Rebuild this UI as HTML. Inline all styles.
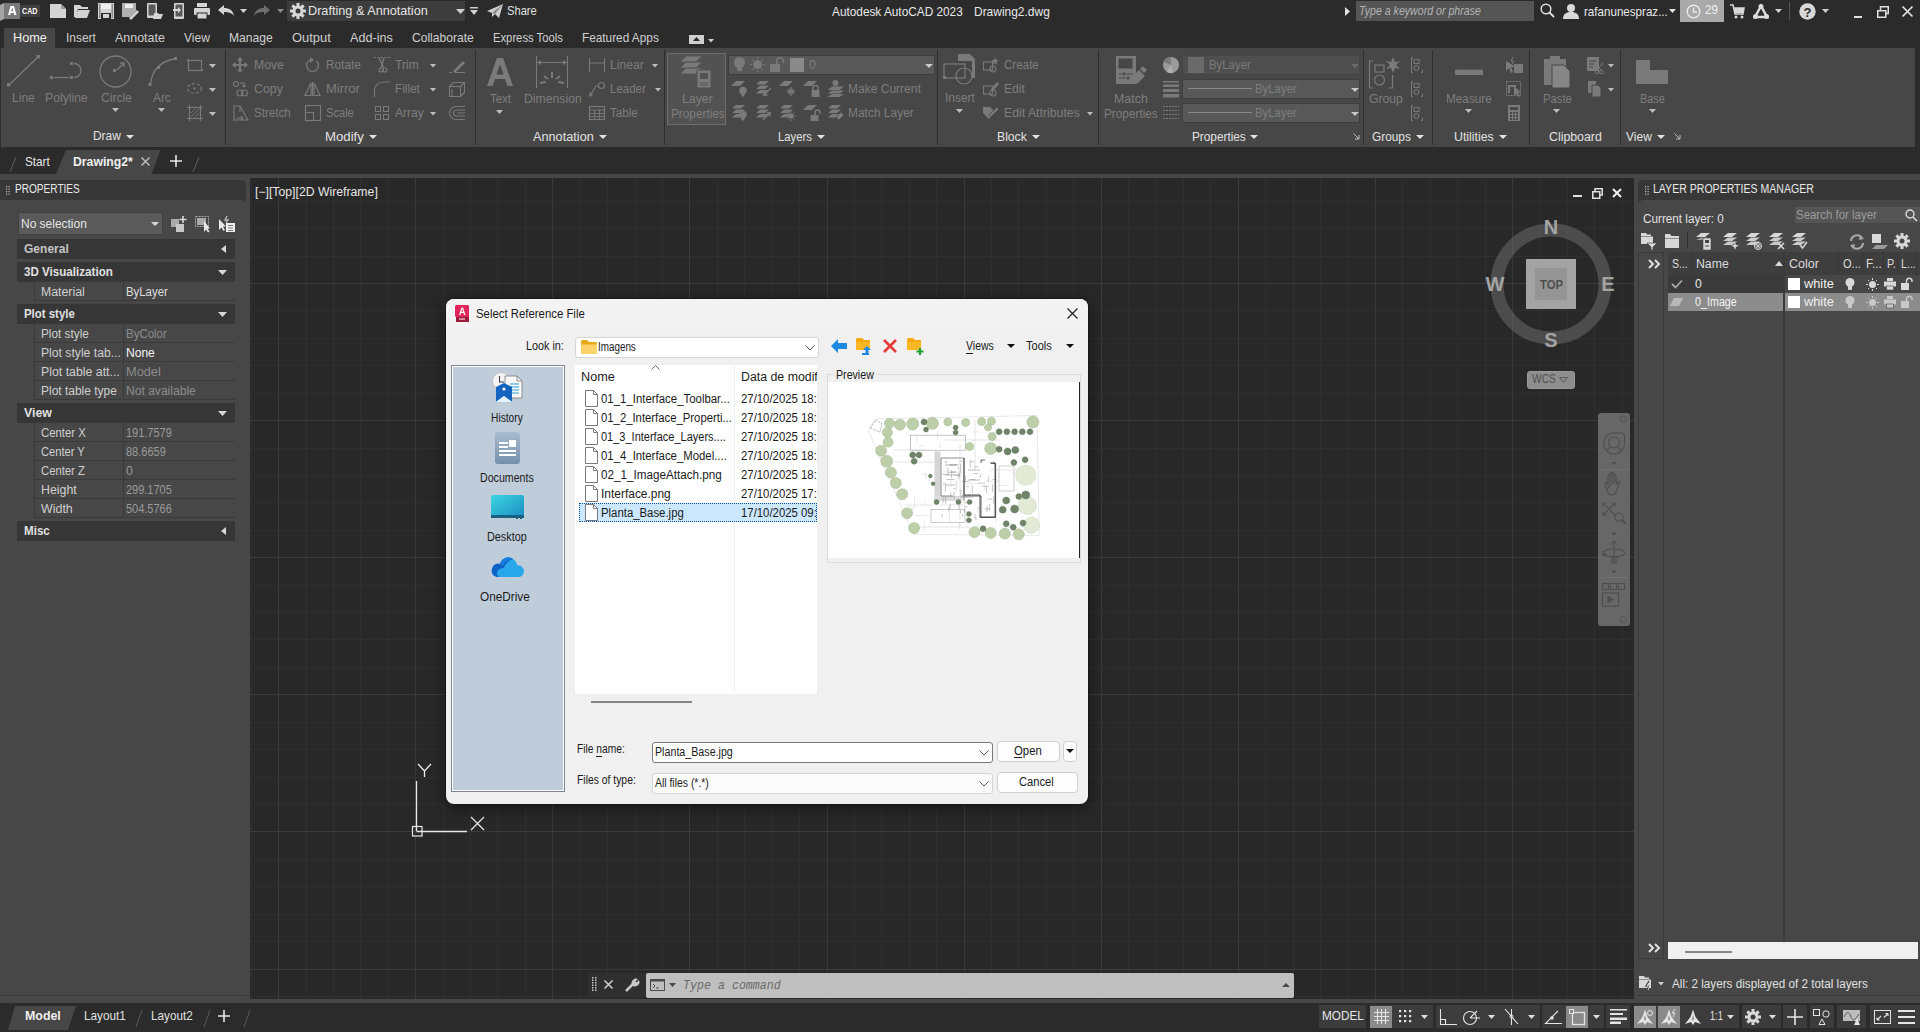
<!DOCTYPE html><html><head><meta charset="utf-8"><style>
html,body{margin:0;padding:0}
body{width:1920px;height:1032px;overflow:hidden;position:relative;background:#2b2b2b;font-family:'Liberation Sans',sans-serif}
</style></head><body><div style="position:absolute;left:0px;top:0px;width:1920px;height:48px;background:#2b2b2b;"></div><div style="position:absolute;left:1px;top:48px;width:1914px;height:99px;background:#474747;"></div><div style="position:absolute;left:0px;top:147px;width:1920px;height:27px;background:#2b2b2b;"></div><div style="position:absolute;left:0px;top:174px;width:1920px;height:4px;background:#474747;"></div><div style="position:absolute;left:0px;top:178px;width:250px;height:821px;background:#474747;"></div><div style="position:absolute;left:1634px;top:178px;width:286px;height:821px;background:#474747;"></div><div style="position:absolute;left:0px;top:999px;width:1920px;height:4px;background:#474747;"></div><div style="position:absolute;left:0px;top:1003px;width:1920px;height:29px;background:#2b2b2b;"></div><svg style="position:absolute;left:250px;top:178px;overflow:visible;" width="1384" height="821" viewBox="0 0 1384 821"><rect width="100%" height="100%" fill="#282828"/><rect x="1" y="0" width="1" height="821" fill="#2f2f2f"/><rect x="28" y="0" width="1" height="821" fill="#3b3b3b"/><rect x="56" y="0" width="1" height="821" fill="#2f2f2f"/><rect x="83" y="0" width="1" height="821" fill="#2f2f2f"/><rect x="110" y="0" width="1" height="821" fill="#2f2f2f"/><rect x="138" y="0" width="1" height="821" fill="#2f2f2f"/><rect x="165" y="0" width="1" height="821" fill="#3b3b3b"/><rect x="193" y="0" width="1" height="821" fill="#2f2f2f"/><rect x="220" y="0" width="1" height="821" fill="#2f2f2f"/><rect x="247" y="0" width="1" height="821" fill="#2f2f2f"/><rect x="275" y="0" width="1" height="821" fill="#2f2f2f"/><rect x="302" y="0" width="1" height="821" fill="#3b3b3b"/><rect x="330" y="0" width="1" height="821" fill="#2f2f2f"/><rect x="357" y="0" width="1" height="821" fill="#2f2f2f"/><rect x="385" y="0" width="1" height="821" fill="#2f2f2f"/><rect x="412" y="0" width="1" height="821" fill="#2f2f2f"/><rect x="439" y="0" width="1" height="821" fill="#3b3b3b"/><rect x="467" y="0" width="1" height="821" fill="#2f2f2f"/><rect x="494" y="0" width="1" height="821" fill="#2f2f2f"/><rect x="522" y="0" width="1" height="821" fill="#2f2f2f"/><rect x="549" y="0" width="1" height="821" fill="#2f2f2f"/><rect x="577" y="0" width="1" height="821" fill="#3b3b3b"/><rect x="604" y="0" width="1" height="821" fill="#2f2f2f"/><rect x="631" y="0" width="1" height="821" fill="#2f2f2f"/><rect x="659" y="0" width="1" height="821" fill="#2f2f2f"/><rect x="686" y="0" width="1" height="821" fill="#2f2f2f"/><rect x="714" y="0" width="1" height="821" fill="#3b3b3b"/><rect x="741" y="0" width="1" height="821" fill="#2f2f2f"/><rect x="768" y="0" width="1" height="821" fill="#2f2f2f"/><rect x="796" y="0" width="1" height="821" fill="#2f2f2f"/><rect x="823" y="0" width="1" height="821" fill="#2f2f2f"/><rect x="851" y="0" width="1" height="821" fill="#3b3b3b"/><rect x="878" y="0" width="1" height="821" fill="#2f2f2f"/><rect x="906" y="0" width="1" height="821" fill="#2f2f2f"/><rect x="933" y="0" width="1" height="821" fill="#2f2f2f"/><rect x="960" y="0" width="1" height="821" fill="#2f2f2f"/><rect x="988" y="0" width="1" height="821" fill="#3b3b3b"/><rect x="1015" y="0" width="1" height="821" fill="#2f2f2f"/><rect x="1043" y="0" width="1" height="821" fill="#2f2f2f"/><rect x="1070" y="0" width="1" height="821" fill="#2f2f2f"/><rect x="1097" y="0" width="1" height="821" fill="#2f2f2f"/><rect x="1125" y="0" width="1" height="821" fill="#3b3b3b"/><rect x="1152" y="0" width="1" height="821" fill="#2f2f2f"/><rect x="1180" y="0" width="1" height="821" fill="#2f2f2f"/><rect x="1207" y="0" width="1" height="821" fill="#2f2f2f"/><rect x="1235" y="0" width="1" height="821" fill="#2f2f2f"/><rect x="1262" y="0" width="1" height="821" fill="#3b3b3b"/><rect x="1289" y="0" width="1" height="821" fill="#2f2f2f"/><rect x="1317" y="0" width="1" height="821" fill="#2f2f2f"/><rect x="1344" y="0" width="1" height="821" fill="#2f2f2f"/><rect x="1372" y="0" width="1" height="821" fill="#2f2f2f"/><rect x="0" y="23" width="1384" height="1" fill="#2f2f2f"/><rect x="0" y="50" width="1384" height="1" fill="#2f2f2f"/><rect x="0" y="78" width="1384" height="1" fill="#2f2f2f"/><rect x="0" y="105" width="1384" height="1" fill="#3b3b3b"/><rect x="0" y="132" width="1384" height="1" fill="#2f2f2f"/><rect x="0" y="160" width="1384" height="1" fill="#2f2f2f"/><rect x="0" y="187" width="1384" height="1" fill="#2f2f2f"/><rect x="0" y="215" width="1384" height="1" fill="#2f2f2f"/><rect x="0" y="242" width="1384" height="1" fill="#3b3b3b"/><rect x="0" y="270" width="1384" height="1" fill="#2f2f2f"/><rect x="0" y="297" width="1384" height="1" fill="#2f2f2f"/><rect x="0" y="324" width="1384" height="1" fill="#2f2f2f"/><rect x="0" y="352" width="1384" height="1" fill="#2f2f2f"/><rect x="0" y="379" width="1384" height="1" fill="#3b3b3b"/><rect x="0" y="407" width="1384" height="1" fill="#2f2f2f"/><rect x="0" y="434" width="1384" height="1" fill="#2f2f2f"/><rect x="0" y="461" width="1384" height="1" fill="#2f2f2f"/><rect x="0" y="489" width="1384" height="1" fill="#2f2f2f"/><rect x="0" y="516" width="1384" height="1" fill="#3b3b3b"/><rect x="0" y="544" width="1384" height="1" fill="#2f2f2f"/><rect x="0" y="571" width="1384" height="1" fill="#2f2f2f"/><rect x="0" y="599" width="1384" height="1" fill="#2f2f2f"/><rect x="0" y="626" width="1384" height="1" fill="#2f2f2f"/><rect x="0" y="653" width="1384" height="1" fill="#3b3b3b"/><rect x="0" y="681" width="1384" height="1" fill="#2f2f2f"/><rect x="0" y="708" width="1384" height="1" fill="#2f2f2f"/><rect x="0" y="736" width="1384" height="1" fill="#2f2f2f"/><rect x="0" y="763" width="1384" height="1" fill="#2f2f2f"/><rect x="0" y="791" width="1384" height="1" fill="#3b3b3b"/><rect x="0" y="818" width="1384" height="1" fill="#2f2f2f"/></svg><svg style="position:absolute;left:0px;top:3px;overflow:visible;" width="20" height="19" viewBox="0 0 20 19"><path d="M0 2 L4 0 V16 L0 18 Z" fill="#a5a5a5"/><rect x="4" y="0" width="16" height="16" fill="#7a7a7a"/><path d="M8 12 L10.5 3 H14 L16.5 12 H14.3 L13.8 10 H10.7 L10.2 12 Z M11.2 8.2 H13.3 L12.25 4.6 Z" fill="#ffffff"/></svg><div style="position:absolute;left:20px;top:5px;width:20px;height:12px;background:#3f3f3f;"></div><svg style="position:absolute;left:20px;top:5px;overflow:visible;" width="20" height="12" viewBox="0 0 20 12"><text x="2" y="9.2" textLength="15.5" lengthAdjust="spacingAndGlyphs" font-family="Liberation Sans" font-weight="bold" font-size="8.8" fill="#ffffff">CAD</text></svg><svg style="position:absolute;left:50px;top:4px;overflow:visible;" width="16" height="14" viewBox="0 0 16 14"><path d="M0 0 H11 L16 5 V14 H0 Z" fill="#d4d4d4"/><path d="M11 0 V5 H16" fill="#9a9a9a"/></svg><svg style="position:absolute;left:74px;top:5px;overflow:visible;" width="16" height="13" viewBox="0 0 16 13"><path d="M0 0 H6 L8 2 H14 V4 H4 L2 12 H0 Z" fill="#d4d4d4"/><path d="M4 5 H16 L13 13 H1 Z" fill="#d4d4d4"/></svg><svg style="position:absolute;left:98px;top:3px;overflow:visible;" width="16" height="16" viewBox="0 0 16 16"><path d="M0 0 H16 V16 H0 Z" fill="#d4d4d4"/><rect x="3" y="1" width="10" height="5" fill="#eeeeee"/><rect x="3" y="10" width="10" height="6" fill="#2b2b2b"/><rect x="5" y="11" width="6" height="4" fill="#d4d4d4"/><rect x="1" y="1" width="1.5" height="14" fill="#8a8a8a"/><rect x="13.5" y="1" width="1.5" height="14" fill="#8a8a8a"/></svg><svg style="position:absolute;left:122px;top:3px;overflow:visible;" width="16" height="16" viewBox="0 0 16 16"><path d="M0 0 H14 V8 L8 14 H0 Z" fill="#b0b0b0"/><rect x="3" y="1" width="8" height="4" fill="#eeeeee"/><path d="M7 15 L15 7 L17 9 L9 17 Z" fill="#d4d4d4"/></svg><svg style="position:absolute;left:147px;top:3px;overflow:visible;" width="16" height="16" viewBox="0 0 16 16"><rect x="0" y="0" width="10" height="15" rx="1" fill="#d4d4d4"/><rect x="1.5" y="1.5" width="7" height="11" fill="#5a5a5a"/><path d="M7 10 H11 L12 11 H16 L14 16 H6 Z" fill="#d4d4d4"/></svg><svg style="position:absolute;left:173px;top:3px;overflow:visible;" width="12" height="16" viewBox="0 0 12 16"><rect x="1" y="0" width="10" height="16" rx="1" fill="#d4d4d4"/><rect x="2.5" y="1.5" width="7" height="12" fill="#5a5a5a"/><path d="M0 6 H5 V4 L8 7 L5 10 V8 H0 Z" fill="#d4d4d4"/></svg><svg style="position:absolute;left:194px;top:3px;overflow:visible;" width="16" height="16" viewBox="0 0 16 16"><rect x="3" y="0" width="10" height="4" fill="#d4d4d4"/><rect x="0" y="5" width="16" height="7" rx="1" fill="#d4d4d4"/><rect x="3" y="10" width="10" height="6" fill="#d4d4d4" stroke="#2b2b2b" stroke-width="1"/></svg><svg style="position:absolute;left:218px;top:5px;overflow:visible;" width="16" height="11" viewBox="0 0 16 11"><path d="M0 5 L6 0 V3 C11 3 15 5 16 11 C14 8 11 7 6 7 V10 Z" fill="#d4d4d4"/></svg><svg style="position:absolute;left:240px;top:9px;overflow:visible;" width="7" height="4" viewBox="0 0 7 4"><path d="M0 0 H7 L3.5 4 Z" fill="#cfcfcf"/></svg><svg style="position:absolute;left:254px;top:5px;overflow:visible;" width="16" height="11" viewBox="0 0 16 11"><path d="M16 5 L10 0 V3 C5 3 1 5 0 11 C2 8 5 7 10 7 V10 Z" fill="#6e6e6e"/></svg><svg style="position:absolute;left:277px;top:9px;overflow:visible;" width="7" height="4" viewBox="0 0 7 4"><path d="M0 0 H7 L3.5 4 Z" fill="#8a8a8a"/></svg><div style="position:absolute;left:287px;top:1px;width:178px;height:20px;background:#3d3d3d;"></div><svg style="position:absolute;left:290px;top:3px;overflow:visible;" width="16" height="16" viewBox="0 0 16 16"><g fill="#d8d8d8"><circle cx="8" cy="8" r="5.5"/><rect x="6.5" y="0" width="3" height="16" transform="rotate(0 8 8)"/><rect x="6.5" y="0" width="3" height="16" transform="rotate(45 8 8)"/><rect x="6.5" y="0" width="3" height="16" transform="rotate(90 8 8)"/><rect x="6.5" y="0" width="3" height="16" transform="rotate(135 8 8)"/></g><circle cx="8" cy="8" r="2.5" fill="#3d3d3d"/></svg><span style="position:absolute;left:308px;top:3.0px;line-height:16px;font-size:13px;font-family:'Liberation Sans',sans-serif;color:#e4e4e4;white-space:nowrap;transform-origin:0 0;transform:scaleX(0.975);">Drafting &amp; Annotation</span><svg style="position:absolute;left:456px;top:9px;overflow:visible;" width="9" height="5" viewBox="0 0 9 5"><path d="M0 0 H9 L4.5 5 Z" fill="#d0d0d0"/></svg><svg style="position:absolute;left:470px;top:7px;overflow:visible;" width="8" height="9" viewBox="0 0 8 9"><rect x="0" y="0" width="8" height="1.5" fill="#d0d0d0"/><path d="M0 3 H8 L4 8 Z" fill="#d0d0d0"/></svg><svg style="position:absolute;left:487px;top:4px;overflow:visible;" width="16" height="14" viewBox="0 0 16 14"><path d="M0 7 L16 0 L12 14 L8 10 L5 13 V9 Z" fill="#cfcfcf"/><path d="M5 9 L16 0 L8 10" fill="#8a8a8a"/></svg><span style="position:absolute;left:507px;top:3.0px;line-height:16px;font-size:13px;font-family:'Liberation Sans',sans-serif;color:#e0e0e0;white-space:nowrap;transform-origin:0 0;transform:scaleX(0.859);">Share</span><span style="position:absolute;left:832px;top:4.0px;line-height:16px;font-size:13px;font-family:'Liberation Sans',sans-serif;color:#e8e8e8;white-space:nowrap;transform-origin:0 0;transform:scaleX(0.909);">Autodesk AutoCAD 2023</span><span style="position:absolute;left:974px;top:4.0px;line-height:16px;font-size:13px;font-family:'Liberation Sans',sans-serif;color:#e8e8e8;white-space:nowrap;transform-origin:0 0;transform:scaleX(0.920);">Drawing2.dwg</span><svg style="position:absolute;left:1345px;top:7px;overflow:visible;" width="5" height="9" viewBox="0 0 5 9"><path d="M0 0 L5 4.5 L0 9 Z" fill="#e0e0e0"/></svg><div style="position:absolute;left:1356px;top:1px;width:178px;height:20px;background:#555555;"></div><span style="position:absolute;left:1359px;top:3.5px;line-height:15px;font-size:12px;font-family:'Liberation Sans',sans-serif;color:#b4b4b4;font-style:italic;white-space:nowrap;transform-origin:0 0;transform:scaleX(0.884);">Type a keyword or phrase</span><svg style="position:absolute;left:1540px;top:3px;overflow:visible;" width="15" height="15" viewBox="0 0 15 15"><circle cx="6" cy="6" r="4.8" fill="none" stroke="#e0e0e0" stroke-width="1.5"/><path d="M9.5 9.5 L14 14" stroke="#e0e0e0" stroke-width="1.8"/></svg><svg style="position:absolute;left:1563px;top:3px;overflow:visible;" width="16" height="16" viewBox="0 0 16 16"><circle cx="8" cy="5" r="4" fill="#d8d8d8"/><path d="M0 16 C0 11 3 9 8 9 C13 9 16 11 16 16 Z" fill="#d8d8d8"/></svg><span style="position:absolute;left:1584px;top:4.0px;line-height:16px;font-size:13px;font-family:'Liberation Sans',sans-serif;color:#e8e8e8;white-space:nowrap;transform-origin:0 0;transform:scaleX(0.892);">rafanunespraz...</span><svg style="position:absolute;left:1669px;top:9px;overflow:visible;" width="7" height="4" viewBox="0 0 7 4"><path d="M0 0 H7 L3.5 4 Z" fill="#e0e0e0"/></svg><div style="position:absolute;left:1680px;top:0px;width:44px;height:22px;background:#a9a9a9;"></div><svg style="position:absolute;left:1686px;top:4px;overflow:visible;" width="15" height="15" viewBox="0 0 15 15"><circle cx="7.5" cy="7.5" r="6.3" fill="none" stroke="#e8e8e8" stroke-width="1.5"/><path d="M7.5 3.5 V8 H11" fill="none" stroke="#e8e8e8" stroke-width="1.5"/></svg><span style="position:absolute;left:1705px;top:2.5px;line-height:15px;font-size:12px;font-family:'Liberation Sans',sans-serif;color:#f0f0f0;white-space:nowrap;transform-origin:0 0;transform:scaleX(0.958);">29</span><svg style="position:absolute;left:1730px;top:4px;overflow:visible;" width="14" height="15" viewBox="0 0 14 15"><path d="M0 1 H3 L5 10 H13 L14 4 H4" fill="none" stroke="#d8d8d8" stroke-width="1.5"/><rect x="4" y="4" width="9" height="5" fill="#d8d8d8"/><circle cx="6" cy="13" r="1.5" fill="#d8d8d8"/><circle cx="12" cy="13" r="1.5" fill="#d8d8d8"/></svg><svg style="position:absolute;left:1753px;top:4px;overflow:visible;" width="16" height="15" viewBox="0 0 16 15"><path d="M8 2 L2 13 H14 Z" fill="none" stroke="#dcdcdc" stroke-width="2.5"/><circle cx="8" cy="2.5" r="2.5" fill="#dcdcdc"/><circle cx="2.5" cy="12.5" r="2.5" fill="#dcdcdc"/><circle cx="13.5" cy="12.5" r="2.5" fill="#dcdcdc"/></svg><svg style="position:absolute;left:1775px;top:9px;overflow:visible;" width="7" height="4" viewBox="0 0 7 4"><path d="M0 0 H7 L3.5 4 Z" fill="#d0d0d0"/></svg><div style="position:absolute;left:1789px;top:2px;width:1px;height:18px;background:#555;"></div><svg style="position:absolute;left:1799px;top:3px;overflow:visible;" width="17" height="17" viewBox="0 0 17 17"><circle cx="8.5" cy="8.5" r="8.2" fill="#d8d8d8"/><text x="8.5" y="13.5" text-anchor="middle" font-family="Liberation Sans" font-weight="bold" font-size="13" fill="#2b2b2b">?</text></svg><svg style="position:absolute;left:1822px;top:9px;overflow:visible;" width="7" height="4" viewBox="0 0 7 4"><path d="M0 0 H7 L3.5 4 Z" fill="#d0d0d0"/></svg><div style="position:absolute;left:1854px;top:16px;width:8px;height:2px;background:#e0e0e0;"></div><svg style="position:absolute;left:1877px;top:6px;overflow:visible;" width="12" height="12" viewBox="0 0 12 12"><rect x="0.75" y="4.75" width="8" height="6.5" fill="none" stroke="#e0e0e0" stroke-width="1.5"/><path d="M3.5 4.5 V0.75 H11.25 V7.5 H9" fill="none" stroke="#e0e0e0" stroke-width="1.5"/></svg><svg style="position:absolute;left:1902px;top:6px;overflow:visible;" width="11" height="11" viewBox="0 0 11 11"><path d="M0.5 0.5 L10.5 10.5 M10.5 0.5 L0.5 10.5" stroke="#e8e8e8" stroke-width="1.6"/></svg><div style="position:absolute;left:4px;top:28px;width:51px;height:20px;background:#474747;"></div><span style="position:absolute;left:13px;top:30.0px;line-height:16px;font-size:13px;font-family:'Liberation Sans',sans-serif;color:#f2f2f2;white-space:nowrap;transform-origin:0 0;transform:scaleX(0.974);">Home</span><span style="position:absolute;left:66px;top:30.0px;line-height:16px;font-size:13px;font-family:'Liberation Sans',sans-serif;color:#cfcfcf;white-space:nowrap;transform-origin:0 0;transform:scaleX(0.916);">Insert</span><span style="position:absolute;left:115px;top:30.0px;line-height:16px;font-size:13px;font-family:'Liberation Sans',sans-serif;color:#cfcfcf;white-space:nowrap;transform-origin:0 0;transform:scaleX(0.957);">Annotate</span><span style="position:absolute;left:184px;top:30.0px;line-height:16px;font-size:13px;font-family:'Liberation Sans',sans-serif;color:#cfcfcf;white-space:nowrap;transform-origin:0 0;transform:scaleX(0.923);">View</span><span style="position:absolute;left:229px;top:30.0px;line-height:16px;font-size:13px;font-family:'Liberation Sans',sans-serif;color:#cfcfcf;white-space:nowrap;transform-origin:0 0;transform:scaleX(0.932);">Manage</span><span style="position:absolute;left:292px;top:30.0px;line-height:16px;font-size:13px;font-family:'Liberation Sans',sans-serif;color:#cfcfcf;white-space:nowrap;transform-origin:0 0;transform:scaleX(0.994);">Output</span><span style="position:absolute;left:350px;top:30.0px;line-height:16px;font-size:13px;font-family:'Liberation Sans',sans-serif;color:#cfcfcf;white-space:nowrap;transform-origin:0 0;transform:scaleX(0.971);">Add-ins</span><span style="position:absolute;left:412px;top:30.0px;line-height:16px;font-size:13px;font-family:'Liberation Sans',sans-serif;color:#cfcfcf;white-space:nowrap;transform-origin:0 0;transform:scaleX(0.929);">Collaborate</span><span style="position:absolute;left:493px;top:30.0px;line-height:16px;font-size:13px;font-family:'Liberation Sans',sans-serif;color:#cfcfcf;white-space:nowrap;transform-origin:0 0;transform:scaleX(0.865);">Express Tools</span><span style="position:absolute;left:582px;top:30.0px;line-height:16px;font-size:13px;font-family:'Liberation Sans',sans-serif;color:#cfcfcf;white-space:nowrap;transform-origin:0 0;transform:scaleX(0.908);">Featured Apps</span><div style="position:absolute;left:689px;top:35px;width:15px;height:9px;background:#d0d0d0;"></div><svg style="position:absolute;left:693px;top:37px;overflow:visible;" width="7" height="4" viewBox="0 0 7 4"><path d="M0 4 L3.5 0 L7 4 Z" fill="#2b2b2b"/></svg><svg style="position:absolute;left:708px;top:39px;overflow:visible;" width="6" height="3.5" viewBox="0 0 6 3.5"><path d="M0 0 H6 L3 3.5 Z" fill="#d0d0d0"/></svg><div style="position:absolute;left:225px;top:50px;width:1px;height:95px;background:#2e2e2e;"></div><div style="position:absolute;left:475px;top:50px;width:1px;height:95px;background:#2e2e2e;"></div><div style="position:absolute;left:664px;top:50px;width:1px;height:95px;background:#2e2e2e;"></div><div style="position:absolute;left:937px;top:50px;width:1px;height:95px;background:#2e2e2e;"></div><div style="position:absolute;left:1098px;top:50px;width:1px;height:95px;background:#2e2e2e;"></div><div style="position:absolute;left:1363px;top:50px;width:1px;height:95px;background:#2e2e2e;"></div><div style="position:absolute;left:1432px;top:50px;width:1px;height:95px;background:#2e2e2e;"></div><div style="position:absolute;left:1529px;top:50px;width:1px;height:95px;background:#2e2e2e;"></div><div style="position:absolute;left:1620px;top:50px;width:1px;height:95px;background:#2e2e2e;"></div><svg style="position:absolute;left:7px;top:55px;overflow:visible;" width="33" height="33" viewBox="0 0 33 33"><line x1="2" y1="30" x2="31" y2="2" stroke="#7a7a7a" stroke-width="1.3"/><rect x="0" y="28" width="3.5" height="3.5" fill="#7a7a7a"/><rect x="29.5" y="0" width="3.5" height="3.5" fill="#7a7a7a"/></svg><span style="position:absolute;left:12px;top:90.5px;line-height:15px;font-size:12px;font-family:'Liberation Sans',sans-serif;color:#7e7e7e;white-space:nowrap;transform-origin:0 0;transform:scaleX(1.005);">Line</span><svg style="position:absolute;left:50px;top:62px;overflow:visible;" width="33" height="20" viewBox="0 0 33 20"><rect x="0" y="14" width="3" height="3" fill="#7a7a7a"/><rect x="20" y="14" width="3" height="3" fill="#7a7a7a"/><rect x="20" y="0" width="3" height="3" fill="#7a7a7a"/><line x1="4" y1="15.5" x2="19" y2="15.5" stroke="#7a7a7a" stroke-width="1.3"/><path d="M24 1.5 A7 7 0 0 1 24 15.5" fill="none" stroke="#7a7a7a" stroke-width="1.3"/></svg><span style="position:absolute;left:45px;top:90.5px;line-height:15px;font-size:12px;font-family:'Liberation Sans',sans-serif;color:#7e7e7e;white-space:nowrap;transform-origin:0 0;transform:scaleX(1.018);">Polyline</span><svg style="position:absolute;left:99px;top:55px;overflow:visible;" width="33" height="33" viewBox="0 0 33 33"><circle cx="16.5" cy="16.5" r="15.5" fill="none" stroke="#7a7a7a" stroke-width="1.3"/><rect x="14" y="14" width="3" height="3" fill="#7a7a7a"/><path d="M18 15 L25 8 M21 8 H25 V12" fill="none" stroke="#7a7a7a" stroke-width="1.3"/></svg><span style="position:absolute;left:101px;top:90.5px;line-height:15px;font-size:12px;font-family:'Liberation Sans',sans-serif;color:#7e7e7e;white-space:nowrap;transform-origin:0 0;transform:scaleX(1.004);">Circle</span><svg style="position:absolute;left:112px;top:108px;overflow:visible;" width="7" height="4" viewBox="0 0 7 4"><path d="M0 0 H7 L3.5 4 Z" fill="#bdbdbd"/></svg><svg style="position:absolute;left:148px;top:57px;overflow:visible;" width="31" height="31" viewBox="0 0 31 31"><path d="M2.5 27 C4 14 12 4 28 1.5" fill="none" stroke="#7a7a7a" stroke-width="1.3"/><rect x="0.5" y="26" width="3" height="3" fill="#7a7a7a"/><rect x="9" y="9" width="3" height="3" fill="#7a7a7a"/><rect x="26" y="0" width="3" height="3" fill="#7a7a7a"/></svg><span style="position:absolute;left:153px;top:90.5px;line-height:15px;font-size:12px;font-family:'Liberation Sans',sans-serif;color:#7e7e7e;white-space:nowrap;transform-origin:0 0;transform:scaleX(0.989);">Arc</span><svg style="position:absolute;left:158px;top:108px;overflow:visible;" width="7" height="4" viewBox="0 0 7 4"><path d="M0 0 H7 L3.5 4 Z" fill="#bdbdbd"/></svg><svg style="position:absolute;left:187px;top:59px;overflow:visible;" width="16" height="13" viewBox="0 0 16 13"><rect x="1.5" y="1.5" width="13" height="10" fill="none" stroke="#7a7a7a" stroke-width="1.2"/><rect x="0" y="0" width="2" height="2" fill="#7a7a7a"/><rect x="14" y="10" width="2" height="2" fill="#7a7a7a"/></svg><svg style="position:absolute;left:187px;top:83px;overflow:visible;" width="15" height="11" viewBox="0 0 15 11"><ellipse cx="7.5" cy="5.5" rx="7" ry="4.8" fill="none" stroke="#7a7a7a" stroke-width="1.2" stroke-dasharray="3 2"/><rect x="6.5" y="4.5" width="2" height="2" fill="#7a7a7a"/></svg><svg style="position:absolute;left:187px;top:105px;overflow:visible;" width="16" height="16" viewBox="0 0 16 16"><rect x="2.5" y="2.5" width="11" height="11" fill="none" stroke="#7a7a7a" stroke-width="1.2"/><path d="M0 2.5 H16 M0 13.5 H16 M2.5 0 V16 M13.5 0 V16" stroke="#7a7a7a" stroke-width="1"/><path d="M4 12 L12 4 M4 8 L8 4 M8 12 L12 8" stroke="#7a7a7a" stroke-width="0.8"/></svg><svg style="position:absolute;left:209px;top:64px;overflow:visible;" width="7" height="4" viewBox="0 0 7 4"><path d="M0 0 H7 L3.5 4 Z" fill="#bdbdbd"/></svg><svg style="position:absolute;left:209px;top:88px;overflow:visible;" width="7" height="4" viewBox="0 0 7 4"><path d="M0 0 H7 L3.5 4 Z" fill="#bdbdbd"/></svg><svg style="position:absolute;left:209px;top:112px;overflow:visible;" width="7" height="4" viewBox="0 0 7 4"><path d="M0 0 H7 L3.5 4 Z" fill="#bdbdbd"/></svg><span style="position:absolute;left:93px;top:128.5px;line-height:15px;font-size:12px;font-family:'Liberation Sans',sans-serif;color:#e2e2e2;white-space:nowrap;transform-origin:0 0;transform:scaleX(0.992);">Draw</span><svg style="position:absolute;left:126px;top:135px;overflow:visible;" width="8" height="4" viewBox="0 0 8 4"><path d="M0 0 H8 L4.0 4 Z" fill="#e2e2e2"/></svg><svg style="position:absolute;left:232px;top:57px;overflow:visible;" width="16" height="16" viewBox="0 0 16 16"><path d="M8 0 L11 3.5 H9 V7 H12.5 V5 L16 8 L12.5 11 V9 H9 V12.5 H11 L8 16 L5 12.5 H7 V9 H3.5 V11 L0 8 L3.5 5 V7 H7 V3.5 H5 Z" fill="#7a7a7a"/></svg><span style="position:absolute;left:254px;top:57.5px;line-height:15px;font-size:12px;font-family:'Liberation Sans',sans-serif;color:#7e7e7e;white-space:nowrap;transform-origin:0 0;transform:scaleX(1.016);">Move</span><svg style="position:absolute;left:233px;top:81px;overflow:visible;" width="16" height="16" viewBox="0 0 16 16"><circle cx="3" cy="3" r="2.5" fill="none" stroke="#7a7a7a" stroke-width="1.1"/><path d="M7 2 H11 V6 M9.5 4.5 L11 6 L12.5 4.5" fill="none" stroke="#7a7a7a" stroke-width="1.1"/><circle cx="7" cy="12" r="3" fill="none" stroke="#7a7a7a" stroke-width="1.1"/><circle cx="11.5" cy="12" r="3" fill="none" stroke="#7a7a7a" stroke-width="1.1"/></svg><span style="position:absolute;left:254px;top:81.5px;line-height:15px;font-size:12px;font-family:'Liberation Sans',sans-serif;color:#7e7e7e;white-space:nowrap;transform-origin:0 0;transform:scaleX(1.028);">Copy</span><svg style="position:absolute;left:233px;top:105px;overflow:visible;" width="16" height="16" viewBox="0 0 16 16"><path d="M1 16 V1 H7 V7 M7 1 L15 15 H1" fill="none" stroke="#7a7a7a" stroke-width="1.1"/><path d="M4 13 H10 M8 11 L10 13 L8 15" fill="none" stroke="#7a7a7a" stroke-width="1.1"/></svg><span style="position:absolute;left:254px;top:105.5px;line-height:15px;font-size:12px;font-family:'Liberation Sans',sans-serif;color:#7e7e7e;white-space:nowrap;transform-origin:0 0;transform:scaleX(0.968);">Stretch</span><svg style="position:absolute;left:305px;top:57px;overflow:visible;" width="15" height="16" viewBox="0 0 15 16"><path d="M11.5 4 A6 6 0 1 1 5 3" fill="none" stroke="#7a7a7a" stroke-width="1.3"/><path d="M5 0 L9 3 L5 6 Z" fill="#7a7a7a"/></svg><span style="position:absolute;left:326px;top:57.5px;line-height:15px;font-size:12px;font-family:'Liberation Sans',sans-serif;color:#7e7e7e;white-space:nowrap;transform-origin:0 0;transform:scaleX(0.984);">Rotate</span><svg style="position:absolute;left:305px;top:82px;overflow:visible;" width="15" height="14" viewBox="0 0 15 14"><path d="M7.5 0 V14 M6 1 L0 13.5 H6 Z M9 1 L15 13.5 H9 Z" fill="none" stroke="#7a7a7a" stroke-width="1.1"/></svg><span style="position:absolute;left:326px;top:81.5px;line-height:15px;font-size:12px;font-family:'Liberation Sans',sans-serif;color:#7e7e7e;white-space:nowrap;transform-origin:0 0;transform:scaleX(1.079);">Mirror</span><svg style="position:absolute;left:305px;top:105px;overflow:visible;" width="16" height="16" viewBox="0 0 16 16"><rect x="0.5" y="0.5" width="15" height="15" fill="none" stroke="#7a7a7a" stroke-width="1.1"/><rect x="0.5" y="7.5" width="8" height="8" fill="none" stroke="#7a7a7a" stroke-width="1.1"/></svg><span style="position:absolute;left:326px;top:105.5px;line-height:15px;font-size:12px;font-family:'Liberation Sans',sans-serif;color:#7e7e7e;white-space:nowrap;transform-origin:0 0;transform:scaleX(0.926);">Scale</span><svg style="position:absolute;left:374px;top:57px;overflow:visible;" width="16" height="16" viewBox="0 0 16 16"><path d="M0 0.5 H16" stroke="#7a7a7a" stroke-width="1" stroke-dasharray="2 1.5"/><path d="M5 1 L10 11 M10 1 L7 11" stroke="#7a7a7a" stroke-width="1.3"/><circle cx="7" cy="13" r="2" fill="none" stroke="#7a7a7a" stroke-width="1.1"/><circle cx="11" cy="13" r="2" fill="none" stroke="#7a7a7a" stroke-width="1.1"/></svg><span style="position:absolute;left:395px;top:57.5px;line-height:15px;font-size:12px;font-family:'Liberation Sans',sans-serif;color:#7e7e7e;white-space:nowrap;transform-origin:0 0;transform:scaleX(1.011);">Trim</span><svg style="position:absolute;left:374px;top:81px;overflow:visible;" width="16" height="16" viewBox="0 0 16 16"><path d="M0.5 16 V10 C0.5 5 4 1 10 1 H16" fill="none" stroke="#7a7a7a" stroke-width="1.1"/></svg><span style="position:absolute;left:395px;top:81.5px;line-height:15px;font-size:12px;font-family:'Liberation Sans',sans-serif;color:#7e7e7e;white-space:nowrap;transform-origin:0 0;transform:scaleX(0.979);">Fillet</span><svg style="position:absolute;left:375px;top:106px;overflow:visible;" width="14" height="14" viewBox="0 0 14 14"><rect x="0.5" y="0.5" width="5" height="5" fill="none" stroke="#7a7a7a"/><rect x="8.5" y="0.5" width="5" height="5" fill="none" stroke="#7a7a7a"/><rect x="0.5" y="8.5" width="5" height="5" fill="none" stroke="#7a7a7a"/><rect x="8.5" y="8.5" width="5" height="5" fill="none" stroke="#7a7a7a"/></svg><span style="position:absolute;left:395px;top:105.5px;line-height:15px;font-size:12px;font-family:'Liberation Sans',sans-serif;color:#7e7e7e;white-space:nowrap;transform-origin:0 0;transform:scaleX(1.004);">Array</span><svg style="position:absolute;left:430px;top:64px;overflow:visible;" width="6" height="3.5" viewBox="0 0 6 3.5"><path d="M0 0 H6 L3.0 3.5 Z" fill="#bdbdbd"/></svg><svg style="position:absolute;left:430px;top:88px;overflow:visible;" width="6" height="3.5" viewBox="0 0 6 3.5"><path d="M0 0 H6 L3.0 3.5 Z" fill="#bdbdbd"/></svg><svg style="position:absolute;left:430px;top:112px;overflow:visible;" width="6" height="3.5" viewBox="0 0 6 3.5"><path d="M0 0 H6 L3.0 3.5 Z" fill="#bdbdbd"/></svg><svg style="position:absolute;left:449px;top:57px;overflow:visible;" width="16" height="16" viewBox="0 0 16 16"><path d="M4 14 L14 4 L16 6 L6 16 Z" fill="#7a7a7a"/><path d="M0 15.5 H3 M6 15.5 H16" stroke="#7a7a7a" stroke-width="1"/></svg><svg style="position:absolute;left:449px;top:81px;overflow:visible;" width="16" height="16" viewBox="0 0 16 16"><path d="M0.5 5.5 H11.5 V15.5 H0.5 Z M0.5 5.5 L4.5 1.5 H15.5 L11.5 5.5 M15.5 1.5 V11.5 L11.5 15.5 M3 8 V15.5" fill="none" stroke="#7a7a7a" stroke-width="1.1"/></svg><svg style="position:absolute;left:449px;top:106px;overflow:visible;" width="16" height="14" viewBox="0 0 16 14"><path d="M16 0.5 H7 A6.5 6.5 0 0 0 7 13.5 H16 M16 4 H7.5 A3 3 0 0 0 7.5 10 H16 M16 7 H8" fill="none" stroke="#7a7a7a" stroke-width="1.1"/></svg><span style="position:absolute;left:325px;top:129.5px;line-height:15px;font-size:12px;font-family:'Liberation Sans',sans-serif;color:#e2e2e2;white-space:nowrap;transform-origin:0 0;transform:scaleX(1.098);">Modify</span><svg style="position:absolute;left:369px;top:135px;overflow:visible;" width="8" height="4" viewBox="0 0 8 4"><path d="M0 0 H8 L4.0 4 Z" fill="#e2e2e2"/></svg><svg style="position:absolute;left:487px;top:58px;overflow:visible;" width="26" height="28" viewBox="0 0 26 28"><path d="M10 0 H16 L26 28 H20.5 L18 21 H8 L5.5 28 H0 Z M9.5 16.5 H16.5 L13 6.5 Z" fill="#7a7a7a"/></svg><span style="position:absolute;left:490px;top:91.5px;line-height:15px;font-size:12px;font-family:'Liberation Sans',sans-serif;color:#7e7e7e;white-space:nowrap;transform-origin:0 0;transform:scaleX(0.945);">Text</span><svg style="position:absolute;left:496px;top:110px;overflow:visible;" width="7" height="4" viewBox="0 0 7 4"><path d="M0 0 H7 L3.5 4 Z" fill="#bdbdbd"/></svg><svg style="position:absolute;left:536px;top:56px;overflow:visible;" width="32" height="32" viewBox="0 0 32 32"><path d="M0.5 0 V32 M31.5 0 V32 M1 6.5 H31" stroke="#7a7a7a" stroke-width="1.1"/><path d="M1 6.5 L5 4 V9 Z M31 6.5 L27 4 V9 Z" fill="#7a7a7a"/><path d="M16 16 V22 M8 20 L12 23 M24 20 L20 23 M4 27 L10 26 M28 27 L22 26" stroke="#7a7a7a" stroke-width="2"/></svg><span style="position:absolute;left:524px;top:91.5px;line-height:15px;font-size:12px;font-family:'Liberation Sans',sans-serif;color:#7e7e7e;white-space:nowrap;transform-origin:0 0;transform:scaleX(1.019);">Dimension</span><svg style="position:absolute;left:589px;top:58px;overflow:visible;" width="16" height="14" viewBox="0 0 16 14"><path d="M0.5 0 V14 M15.5 0 V14 M1 5 H15" stroke="#7a7a7a" stroke-width="1.1"/></svg><span style="position:absolute;left:610px;top:57.5px;line-height:15px;font-size:12px;font-family:'Liberation Sans',sans-serif;color:#7e7e7e;white-space:nowrap;transform-origin:0 0;transform:scaleX(1.013);">Linear</span><svg style="position:absolute;left:589px;top:82px;overflow:visible;" width="16" height="15" viewBox="0 0 16 15"><circle cx="12.5" cy="3.5" r="3" fill="none" stroke="#7a7a7a" stroke-width="1.1"/><path d="M9.5 4 H7 L1 14" fill="none" stroke="#7a7a7a" stroke-width="1.1"/><path d="M0 15 L1 10 L4 13 Z" fill="#7a7a7a"/></svg><span style="position:absolute;left:610px;top:81.5px;line-height:15px;font-size:12px;font-family:'Liberation Sans',sans-serif;color:#7e7e7e;white-space:nowrap;transform-origin:0 0;transform:scaleX(0.958);">Leader</span><svg style="position:absolute;left:589px;top:106px;overflow:visible;" width="16" height="14" viewBox="0 0 16 14"><rect x="0.5" y="0.5" width="15" height="13" fill="none" stroke="#7a7a7a" stroke-width="1.1"/><path d="M0.5 4 H15.5 M0.5 7.5 H15.5 M0.5 10.5 H15.5 M5.5 4 V13.5 M10.5 4 V13.5" stroke="#7a7a7a" stroke-width="0.9"/></svg><span style="position:absolute;left:610px;top:105.5px;line-height:15px;font-size:12px;font-family:'Liberation Sans',sans-serif;color:#7e7e7e;white-space:nowrap;transform-origin:0 0;transform:scaleX(0.969);">Table</span><svg style="position:absolute;left:652px;top:64px;overflow:visible;" width="6" height="3.5" viewBox="0 0 6 3.5"><path d="M0 0 H6 L3.0 3.5 Z" fill="#bdbdbd"/></svg><svg style="position:absolute;left:655px;top:88px;overflow:visible;" width="6" height="3.5" viewBox="0 0 6 3.5"><path d="M0 0 H6 L3.0 3.5 Z" fill="#bdbdbd"/></svg><span style="position:absolute;left:533px;top:129.5px;line-height:15px;font-size:12px;font-family:'Liberation Sans',sans-serif;color:#e2e2e2;white-space:nowrap;transform-origin:0 0;transform:scaleX(1.059);">Annotation</span><svg style="position:absolute;left:599px;top:135px;overflow:visible;" width="8" height="4" viewBox="0 0 8 4"><path d="M0 0 H8 L4.0 4 Z" fill="#e2e2e2"/></svg><div style="position:absolute;left:667px;top:53px;width:59px;height:72px;background:#525252;box-sizing:border-box;border:1px solid #6e6e6e;"></div><svg style="position:absolute;left:680px;top:56px;overflow:visible;" width="32" height="32" viewBox="0 0 32 32"><path d="M6 0 H22 L16 6 H0 Z M6 6 H22 L16 12 H0 Z M6 12 H22 L16 18 H0 Z" fill="#7a7a7a" stroke="#525252" stroke-width="0.8"/><rect x="17" y="14" width="14" height="18" fill="#7a7a7a" stroke="#525252"/><rect x="20" y="17" width="8" height="6" fill="#525252"/><path d="M20 27 H28 M20 29 H28" stroke="#525252" stroke-width="1"/></svg><span style="position:absolute;left:682px;top:91.5px;line-height:15px;font-size:12px;font-family:'Liberation Sans',sans-serif;color:#7e7e7e;white-space:nowrap;transform-origin:0 0;transform:scaleX(1.026);">Layer</span><span style="position:absolute;left:671px;top:106.5px;line-height:15px;font-size:12px;font-family:'Liberation Sans',sans-serif;color:#7e7e7e;white-space:nowrap;transform-origin:0 0;transform:scaleX(0.983);">Properties</span><div style="position:absolute;left:728px;top:55px;width:207px;height:20px;background:#585858;box-sizing:border-box;border:1px solid #3e3e3e;"></div><svg style="position:absolute;left:734px;top:57px;overflow:visible;" width="11" height="15" viewBox="0 0 11 15"><circle cx="5.5" cy="5.5" r="5.5" fill="#7a7a7a"/><rect x="3" y="10" width="5" height="4" rx="1.5" fill="#7a7a7a"/></svg><svg style="position:absolute;left:750px;top:57px;overflow:visible;" width="15" height="15" viewBox="0 0 15 15"><circle cx="7.5" cy="7.5" r="4.5" fill="#7a7a7a"/><path d="M7.5 0 V2 M7.5 13 V15 M0 7.5 H2 M13 7.5 H15 M2.2 2.2 L3.6 3.6 M11.4 11.4 L12.8 12.8 M2.2 12.8 L3.6 11.4 M11.4 3.6 L12.8 2.2" stroke="#7a7a7a" stroke-width="1.1"/></svg><svg style="position:absolute;left:770px;top:57px;overflow:visible;" width="14" height="15" viewBox="0 0 14 15"><rect x="0" y="7" width="10" height="8" fill="#7a7a7a"/><path d="M7 7 V4 A3.2 3.2 0 0 1 13.4 4 V6" fill="none" stroke="#7a7a7a" stroke-width="1.6"/></svg><div style="position:absolute;left:790px;top:58px;width:14px;height:14px;background:#8a8a8a;"></div><span style="position:absolute;left:809px;top:57.5px;line-height:15px;font-size:12px;font-family:'Liberation Sans',sans-serif;color:#808080;white-space:nowrap;transform-origin:0 0;transform:scaleX(1.017);">0</span><svg style="position:absolute;left:925px;top:64px;overflow:visible;" width="8" height="4" viewBox="0 0 8 4"><path d="M0 0 H8 L4.0 4 Z" fill="#c8c8c8"/></svg><svg style="position:absolute;left:731px;top:80px;overflow:visible;" width="17" height="17" viewBox="0 0 17 17"><path d="M5 1 H14 L9 6 H0 Z" fill="#7a7a7a"/><circle cx="12" cy="10.5" r="3.8" fill="#7a7a7a"/><rect x="10.5" y="13.5" width="3" height="3" rx="1" fill="#7a7a7a"/></svg><svg style="position:absolute;left:731px;top:104px;overflow:visible;" width="17" height="17" viewBox="0 0 17 17"><path d="M5 1 H14 L10 4.5 H1 Z M5 5.5 H14 L10 9 H1 Z M5 10 H14 L10 13.5 H1 Z" fill="#7a7a7a"/><circle cx="12" cy="10.5" r="3.8" fill="#7a7a7a"/><rect x="10.5" y="13.5" width="3" height="3" rx="1" fill="#7a7a7a"/></svg><svg style="position:absolute;left:755px;top:80px;overflow:visible;" width="17" height="17" viewBox="0 0 17 17"><path d="M5 1 H14 L10 4.5 H1 Z M5 5.5 H14 L10 9 H1 Z M5 10 H14 L10 13.5 H1 Z" fill="#7a7a7a"/><path d="M16 8 L9 15" stroke="#7a7a7a" stroke-width="1.3"/><path d="M8 16 L8.5 11 L13 15.5 Z" fill="#7a7a7a"/></svg><svg style="position:absolute;left:755px;top:104px;overflow:visible;" width="17" height="17" viewBox="0 0 17 17"><path d="M5 1 H14 L10 4.5 H1 Z M5 5.5 H14 L10 9 H1 Z M5 10 H14 L10 13.5 H1 Z" fill="#7a7a7a"/><path d="M8 16 L15 9" stroke="#7a7a7a" stroke-width="1.3"/><path d="M16 8 L15.5 13 L11 8.5 Z" fill="#7a7a7a"/></svg><svg style="position:absolute;left:779px;top:80px;overflow:visible;" width="17" height="17" viewBox="0 0 17 17"><path d="M5 1 H14 L9 6 H0 Z" fill="#7a7a7a"/><g stroke="#7a7a7a" stroke-width="1"><path d="M12 7 V16 M8 11.5 H16 M9.2 8.7 L14.8 14.3 M14.8 8.7 L9.2 14.3"/></g><circle cx="12" cy="11.5" r="2.5" fill="none" stroke="#7a7a7a"/></svg><svg style="position:absolute;left:779px;top:104px;overflow:visible;" width="17" height="17" viewBox="0 0 17 17"><path d="M5 1 H14 L10 4.5 H1 Z M5 5.5 H14 L10 9 H1 Z M5 10 H14 L10 13.5 H1 Z" fill="#7a7a7a"/><circle cx="12" cy="12" r="2.8" fill="#7a7a7a"/><path d="M12 7 V8.5 M12 15.5 V17 M7 12 H8.5 M15.5 12 H17 M8.5 8.5 L9.5 9.5 M14.5 14.5 L15.5 15.5 M8.5 15.5 L9.5 14.5 M14.5 9.5 L15.5 8.5" stroke="#7a7a7a" stroke-width="1"/></svg><svg style="position:absolute;left:803px;top:80px;overflow:visible;" width="17" height="17" viewBox="0 0 17 17"><path d="M5 1 H14 L9 6 H0 Z" fill="#7a7a7a"/><rect x="8.5" y="10" width="8" height="7" fill="#7a7a7a"/><path d="M10 10 V8 A2.5 2.5 0 0 1 15 8 V10" fill="none" stroke="#7a7a7a" stroke-width="1.5"/></svg><svg style="position:absolute;left:803px;top:104px;overflow:visible;" width="17" height="17" viewBox="0 0 17 17"><path d="M5 1 H14 L9 6 H0 Z" fill="#7a7a7a"/><rect x="7.5" y="11" width="8" height="6" fill="#7a7a7a"/><path d="M12 11 V8.5 A2.5 2.5 0 0 1 17 8.5 V10" fill="none" stroke="#7a7a7a" stroke-width="1.5"/></svg><svg style="position:absolute;left:827px;top:80px;overflow:visible;" width="17" height="17" viewBox="0 0 17 17"><circle cx="8.5" cy="3" r="3" fill="#7a7a7a"/><path d="M5 6.5 H17 L12.5 10 H0.5 Z M5 10.5 H17 L12.5 13.5 H0.5 Z M5 14 H17 L12.5 17 H0.5 Z" fill="#7a7a7a"/></svg><svg style="position:absolute;left:827px;top:104px;overflow:visible;" width="17" height="17" viewBox="0 0 17 17"><path d="M5 1 H14 L10 4.5 H1 Z M5 5.5 H14 L10 9 H1 Z M5 10 H14 L10 13.5 H1 Z" fill="#7a7a7a"/><path d="M9 13 L14 8 L17 11 L12 16 Z" fill="#7a7a7a" stroke="#474747" stroke-width="0.7"/></svg><span style="position:absolute;left:848px;top:81.5px;line-height:15px;font-size:12px;font-family:'Liberation Sans',sans-serif;color:#7e7e7e;white-space:nowrap;transform-origin:0 0;transform:scaleX(1.001);">Make Current</span><span style="position:absolute;left:848px;top:105.5px;line-height:15px;font-size:12px;font-family:'Liberation Sans',sans-serif;color:#7e7e7e;white-space:nowrap;transform-origin:0 0;transform:scaleX(0.996);">Match Layer</span><span style="position:absolute;left:778px;top:129.5px;line-height:15px;font-size:12px;font-family:'Liberation Sans',sans-serif;color:#e2e2e2;white-space:nowrap;transform-origin:0 0;transform:scaleX(0.938);">Layers</span><svg style="position:absolute;left:817px;top:135px;overflow:visible;" width="8" height="4" viewBox="0 0 8 4"><path d="M0 0 H8 L4.0 4 Z" fill="#e2e2e2"/></svg><svg style="position:absolute;left:943px;top:54px;overflow:visible;" width="32" height="32" viewBox="0 0 32 32"><path d="M15 0 H27 L32 5 V24 H29 V7 H15 Z" fill="#7a7a7a"/><rect x="1" y="10" width="21" height="14" fill="none" stroke="#7a7a7a" stroke-width="1.2"/><circle cx="21" cy="22" r="8" fill="none" stroke="#7a7a7a" stroke-width="1.2"/><rect x="0" y="22" width="3" height="3" fill="#7a7a7a"/></svg><span style="position:absolute;left:945px;top:90.5px;line-height:15px;font-size:12px;font-family:'Liberation Sans',sans-serif;color:#7e7e7e;white-space:nowrap;transform-origin:0 0;transform:scaleX(0.993);">Insert</span><svg style="position:absolute;left:956px;top:109px;overflow:visible;" width="7" height="4" viewBox="0 0 7 4"><path d="M0 0 H7 L3.5 4 Z" fill="#bdbdbd"/></svg><svg style="position:absolute;left:983px;top:57px;overflow:visible;" width="16" height="16" viewBox="0 0 16 16"><rect x="0.5" y="5" width="9" height="8" fill="none" stroke="#7a7a7a" stroke-width="1.1"/><circle cx="10" cy="12" r="3" fill="none" stroke="#7a7a7a" stroke-width="1.1"/><path d="M12 0 L13 3 L16 3 L13.5 5 L14.5 8 L12 6 L9.5 8 L10.5 5 L8 3 L11 3 Z" fill="#7a7a7a"/></svg><span style="position:absolute;left:1004px;top:57.5px;line-height:15px;font-size:12px;font-family:'Liberation Sans',sans-serif;color:#7e7e7e;white-space:nowrap;transform-origin:0 0;transform:scaleX(0.966);">Create</span><svg style="position:absolute;left:983px;top:81px;overflow:visible;" width="16" height="16" viewBox="0 0 16 16"><rect x="0.5" y="5" width="9" height="8" fill="none" stroke="#7a7a7a" stroke-width="1.1"/><circle cx="10" cy="12" r="3" fill="none" stroke="#7a7a7a" stroke-width="1.1"/><path d="M8 8 L14 1 L16 3 L10 10 Z" fill="#7a7a7a"/></svg><span style="position:absolute;left:1004px;top:81.5px;line-height:15px;font-size:12px;font-family:'Liberation Sans',sans-serif;color:#7e7e7e;white-space:nowrap;transform-origin:0 0;transform:scaleX(1.005);">Edit</span><svg style="position:absolute;left:983px;top:105px;overflow:visible;" width="16" height="16" viewBox="0 0 16 16"><path d="M0 2 H7 L12 7 L6 14 L0 8 Z" fill="#7a7a7a"/><path d="M6 10 L14 2 L16 4 L8 12 Z" fill="#7a7a7a" stroke="#474747" stroke-width="0.8"/></svg><span style="position:absolute;left:1004px;top:105.5px;line-height:15px;font-size:12px;font-family:'Liberation Sans',sans-serif;color:#7e7e7e;white-space:nowrap;transform-origin:0 0;transform:scaleX(1.024);">Edit Attributes</span><svg style="position:absolute;left:1087px;top:112px;overflow:visible;" width="6" height="3.5" viewBox="0 0 6 3.5"><path d="M0 0 H6 L3.0 3.5 Z" fill="#bdbdbd"/></svg><span style="position:absolute;left:997px;top:129.5px;line-height:15px;font-size:12px;font-family:'Liberation Sans',sans-serif;color:#e2e2e2;white-space:nowrap;transform-origin:0 0;transform:scaleX(1.016);">Block</span><svg style="position:absolute;left:1032px;top:135px;overflow:visible;" width="8" height="4" viewBox="0 0 8 4"><path d="M0 0 H8 L4.0 4 Z" fill="#e2e2e2"/></svg><svg style="position:absolute;left:1116px;top:56px;overflow:visible;" width="31" height="32" viewBox="0 0 31 32"><rect x="0" y="0" width="20" height="28" fill="#7a7a7a"/><rect x="3" y="3" width="13" height="9" fill="#474747" stroke="#474747"/><path d="M3 18 H17 M3 22 H14 M8 16 V20 M12 20 V24" stroke="#474747" stroke-width="1.2"/><path d="M15 22 L23 14 L29 20 L21 28 Z" fill="#7a7a7a"/><path d="M24 13 L27 10 L31 14 L28 17 Z" fill="#7a7a7a"/></svg><span style="position:absolute;left:1114px;top:91.5px;line-height:15px;font-size:12px;font-family:'Liberation Sans',sans-serif;color:#7e7e7e;white-space:nowrap;transform-origin:0 0;transform:scaleX(1.034);">Match</span><span style="position:absolute;left:1104px;top:106.5px;line-height:15px;font-size:12px;font-family:'Liberation Sans',sans-serif;color:#7e7e7e;white-space:nowrap;transform-origin:0 0;transform:scaleX(0.983);">Properties</span><svg style="position:absolute;left:1163px;top:57px;overflow:visible;" width="16" height="16" viewBox="0 0 16 16"><circle cx="8" cy="8" r="8" fill="#9a9a9a"/><path d="M8 8 V0 A8 8 0 0 0 0.5 5 Z" fill="#7a7a7a"/><path d="M8 8 L4 15 A8 8 0 0 0 10 16 Z" fill="#b0b0b0"/></svg><svg style="position:absolute;left:1163px;top:81px;overflow:visible;" width="16" height="16" viewBox="0 0 16 16"><rect x="0" y="0" width="16" height="1.5" fill="#7a7a7a"/><rect x="0" y="3.5" width="16" height="2.5" fill="#7a7a7a"/><rect x="0" y="8" width="16" height="3" fill="#7a7a7a"/><rect x="0" y="13" width="16" height="3.5" fill="#7a7a7a"/></svg><svg style="position:absolute;left:1163px;top:106px;overflow:visible;" width="16" height="14" viewBox="0 0 16 14"><path d="M0 0.5 H16 M0 4.5 H16 M0 8.5 H16 M0 12.5 H16" stroke="#7a7a7a" stroke-width="1" stroke-dasharray="2 1"/></svg><div style="position:absolute;left:1182px;top:55px;width:178px;height:20px;background:#4f4f4f;box-sizing:border-box;border:1px solid #444;"></div><div style="position:absolute;left:1188px;top:57px;width:16px;height:16px;background:#6a6a6a;"></div><span style="position:absolute;left:1209px;top:57.5px;line-height:15px;font-size:12px;font-family:'Liberation Sans',sans-serif;color:#7a7a7a;white-space:nowrap;transform-origin:0 0;transform:scaleX(0.949);">ByLayer</span><svg style="position:absolute;left:1351px;top:64px;overflow:visible;" width="8" height="4" viewBox="0 0 8 4"><path d="M0 0 H8 L4.0 4 Z" fill="#6a6a6a"/></svg><div style="position:absolute;left:1182px;top:79px;width:178px;height:20px;background:#585858;box-sizing:border-box;border:1px solid #3e3e3e;"></div><div style="position:absolute;left:1188px;top:88px;width:64px;height:1px;background:#8a8a8a;"></div><span style="position:absolute;left:1255px;top:81.5px;line-height:15px;font-size:12px;font-family:'Liberation Sans',sans-serif;color:#7e7e7e;white-space:nowrap;transform-origin:0 0;transform:scaleX(0.949);">ByLayer</span><svg style="position:absolute;left:1351px;top:88px;overflow:visible;" width="8" height="4" viewBox="0 0 8 4"><path d="M0 0 H8 L4.0 4 Z" fill="#c8c8c8"/></svg><div style="position:absolute;left:1182px;top:103px;width:178px;height:20px;background:#585858;box-sizing:border-box;border:1px solid #3e3e3e;"></div><div style="position:absolute;left:1188px;top:112px;width:64px;height:1px;background:#8a8a8a;"></div><span style="position:absolute;left:1255px;top:105.5px;line-height:15px;font-size:12px;font-family:'Liberation Sans',sans-serif;color:#7e7e7e;white-space:nowrap;transform-origin:0 0;transform:scaleX(0.949);">ByLayer</span><svg style="position:absolute;left:1351px;top:112px;overflow:visible;" width="8" height="4" viewBox="0 0 8 4"><path d="M0 0 H8 L4.0 4 Z" fill="#c8c8c8"/></svg><span style="position:absolute;left:1192px;top:129.5px;line-height:15px;font-size:12px;font-family:'Liberation Sans',sans-serif;color:#e2e2e2;white-space:nowrap;transform-origin:0 0;transform:scaleX(0.983);">Properties</span><svg style="position:absolute;left:1250px;top:135px;overflow:visible;" width="8" height="4" viewBox="0 0 8 4"><path d="M0 0 H8 L4.0 4 Z" fill="#e2e2e2"/></svg><svg style="position:absolute;left:1353px;top:133px;overflow:visible;" width="7" height="7" viewBox="0 0 7 7"><path d="M0.5 0.5 L6 6 M2 6 H6 V2" fill="none" stroke="#c0c0c0" stroke-width="1"/></svg><svg style="position:absolute;left:1369px;top:57px;overflow:visible;" width="32" height="32" viewBox="0 0 32 32"><path d="M4 4 H0.5 V31 H4 M20 31 H23.5 V18" fill="none" stroke="#7a7a7a" stroke-width="1.2"/><rect x="6" y="8" width="9" height="7" fill="none" stroke="#7a7a7a" stroke-width="1.2"/><circle cx="10.5" cy="23" r="5" fill="none" stroke="#7a7a7a" stroke-width="1.2"/><path d="M24 0 L26 5 L31 4 L27 8 L31 12 L26 11 L24 16 L22 11 L17 12 L21 8 L17 4 L22 5 Z" fill="#7a7a7a"/></svg><span style="position:absolute;left:1369px;top:91.5px;line-height:15px;font-size:12px;font-family:'Liberation Sans',sans-serif;color:#7e7e7e;white-space:nowrap;transform-origin:0 0;transform:scaleX(1.013);">Group</span><svg style="position:absolute;left:1411px;top:57px;overflow:visible;" width="16" height="16" viewBox="0 0 16 16"><path d="M2 0.5 H0.5 V15.5 H2 M10 15.5 H11.5 V13" fill="none" stroke="#7a7a7a" stroke-width="1"/><rect x="3" y="2.5" width="5" height="4" fill="none" stroke="#7a7a7a"/><circle cx="5.5" cy="11" r="2.5" fill="none" stroke="#7a7a7a"/></svg><svg style="position:absolute;left:1411px;top:81px;overflow:visible;" width="16" height="16" viewBox="0 0 16 16"><path d="M2 0.5 H0.5 V15.5 H2 M10 15.5 H11.5 V13" fill="none" stroke="#7a7a7a" stroke-width="1"/><rect x="3" y="2.5" width="5" height="4" fill="none" stroke="#7a7a7a"/><circle cx="5.5" cy="11" r="2.5" fill="none" stroke="#7a7a7a"/></svg><svg style="position:absolute;left:1411px;top:105px;overflow:visible;" width="16" height="16" viewBox="0 0 16 16"><path d="M2 0.5 H0.5 V15.5 H2 M10 15.5 H11.5 V13" fill="none" stroke="#7a7a7a" stroke-width="1"/><rect x="3" y="2.5" width="5" height="4" fill="none" stroke="#7a7a7a"/><circle cx="5.5" cy="11" r="2.5" fill="none" stroke="#7a7a7a"/></svg><span style="position:absolute;left:1372px;top:129.5px;line-height:15px;font-size:12px;font-family:'Liberation Sans',sans-serif;color:#e2e2e2;white-space:nowrap;transform-origin:0 0;transform:scaleX(0.986);">Groups</span><svg style="position:absolute;left:1416px;top:135px;overflow:visible;" width="8" height="4" viewBox="0 0 8 4"><path d="M0 0 H8 L4.0 4 Z" fill="#e2e2e2"/></svg><svg style="position:absolute;left:1455px;top:69px;overflow:visible;" width="28" height="6" viewBox="0 0 28 6"><rect x="0" y="1" width="28" height="5" fill="#7a7a7a"/><path d="M2 0 V2 M5 0 V2 M8 0 V2 M11 0 V2 M14 0 V2 M17 0 V2 M20 0 V2 M23 0 V2 M26 0 V2" stroke="#7a7a7a"/></svg><span style="position:absolute;left:1446px;top:91.5px;line-height:15px;font-size:12px;font-family:'Liberation Sans',sans-serif;color:#7e7e7e;white-space:nowrap;transform-origin:0 0;transform:scaleX(0.981);">Measure</span><svg style="position:absolute;left:1465px;top:109px;overflow:visible;" width="7" height="4" viewBox="0 0 7 4"><path d="M0 0 H7 L3.5 4 Z" fill="#bdbdbd"/></svg><svg style="position:absolute;left:1506px;top:57px;overflow:visible;" width="17" height="16" viewBox="0 0 17 16"><path d="M0 4 L7 14 L4 9 Z M0 4 L8 9 L4 9 Z" fill="#7a7a7a"/><path d="M0 4 V14 L3 11 L5 16 L7 15 L5 10 H9 Z" fill="#7a7a7a"/><rect x="8" y="7" width="9" height="9" fill="#7a7a7a"/><path d="M7 0 L5 4 H8 L6 7" stroke="#7a7a7a" fill="none"/></svg><svg style="position:absolute;left:1506px;top:81px;overflow:visible;" width="16" height="16" viewBox="0 0 16 16"><rect x="0.5" y="0.5" width="14" height="14" fill="none" stroke="#7a7a7a" stroke-dasharray="2 1"/><path d="M8 5 V15 L10.5 12.5 L12.5 16 L14 15 L12 11.5 H15 Z" fill="#7a7a7a"/><path d="M3 12 V5 H10" fill="none" stroke="#7a7a7a" stroke-width="2"/></svg><svg style="position:absolute;left:1508px;top:105px;overflow:visible;" width="12" height="16" viewBox="0 0 12 16"><rect x="0" y="0" width="12" height="16" fill="#7a7a7a"/><rect x="2" y="2" width="8" height="3" fill="#474747"/><rect x="2" y="7" width="2" height="2" fill="#474747"/><rect x="5" y="7" width="2" height="2" fill="#474747"/><rect x="8" y="7" width="2" height="2" fill="#474747"/><rect x="2" y="10" width="2" height="2" fill="#474747"/><rect x="5" y="10" width="2" height="2" fill="#474747"/><rect x="8" y="10" width="2" height="2" fill="#474747"/><rect x="2" y="13" width="2" height="2" fill="#474747"/><rect x="5" y="13" width="2" height="2" fill="#474747"/><rect x="8" y="13" width="2" height="2" fill="#474747"/></svg><span style="position:absolute;left:1454px;top:129.5px;line-height:15px;font-size:12px;font-family:'Liberation Sans',sans-serif;color:#e2e2e2;white-space:nowrap;transform-origin:0 0;transform:scaleX(1.029);">Utilities</span><svg style="position:absolute;left:1499px;top:135px;overflow:visible;" width="8" height="4" viewBox="0 0 8 4"><path d="M0 0 H8 L4.0 4 Z" fill="#e2e2e2"/></svg><svg style="position:absolute;left:1544px;top:56px;overflow:visible;" width="26" height="32" viewBox="0 0 26 32"><rect x="0" y="3" width="22" height="26" fill="#7a7a7a"/><rect x="6" y="0" width="10" height="4" fill="#7a7a7a"/><path d="M8 9 H20 L26 15 V32 H8 Z" fill="#868686" stroke="#474747" stroke-width="1"/></svg><span style="position:absolute;left:1543px;top:91.5px;line-height:15px;font-size:12px;font-family:'Liberation Sans',sans-serif;color:#7e7e7e;white-space:nowrap;transform-origin:0 0;transform:scaleX(0.938);">Paste</span><svg style="position:absolute;left:1553px;top:109px;overflow:visible;" width="7" height="4" viewBox="0 0 7 4"><path d="M0 0 H7 L3.5 4 Z" fill="#bdbdbd"/></svg><svg style="position:absolute;left:1587px;top:57px;overflow:visible;" width="17" height="17" viewBox="0 0 17 17"><rect x="0" y="0" width="12" height="14" fill="#7a7a7a"/><path d="M2 4 H9 M2 7 H7 M2 10 H6" stroke="#474747"/><circle cx="10" cy="15" r="1.8" fill="none" stroke="#7a7a7a"/><circle cx="14.5" cy="15" r="1.8" fill="none" stroke="#7a7a7a"/><path d="M8 6 L14 13 M16 6 L10 13" stroke="#7a7a7a"/></svg><svg style="position:absolute;left:1588px;top:81px;overflow:visible;" width="13" height="16" viewBox="0 0 13 16"><rect x="0" y="0" width="8" height="12" fill="#7a7a7a"/><path d="M4 4 H10 L13 7 V16 H4 Z" fill="#7a7a7a" stroke="#474747"/></svg><svg style="position:absolute;left:1608px;top:64px;overflow:visible;" width="6" height="3.5" viewBox="0 0 6 3.5"><path d="M0 0 H6 L3.0 3.5 Z" fill="#bdbdbd"/></svg><svg style="position:absolute;left:1608px;top:88px;overflow:visible;" width="6" height="3.5" viewBox="0 0 6 3.5"><path d="M0 0 H6 L3.0 3.5 Z" fill="#bdbdbd"/></svg><span style="position:absolute;left:1549px;top:129.5px;line-height:15px;font-size:12px;font-family:'Liberation Sans',sans-serif;color:#e2e2e2;white-space:nowrap;transform-origin:0 0;transform:scaleX(1.028);">Clipboard</span><svg style="position:absolute;left:1636px;top:60px;overflow:visible;" width="32" height="24" viewBox="0 0 32 24"><path d="M0 0 H14 V10 H32 V24 H0 Z" fill="#7a7a7a"/></svg><span style="position:absolute;left:1640px;top:91.5px;line-height:15px;font-size:12px;font-family:'Liberation Sans',sans-serif;color:#7e7e7e;white-space:nowrap;transform-origin:0 0;transform:scaleX(0.906);">Base</span><svg style="position:absolute;left:1649px;top:109px;overflow:visible;" width="7" height="4" viewBox="0 0 7 4"><path d="M0 0 H7 L3.5 4 Z" fill="#bdbdbd"/></svg><span style="position:absolute;left:1626px;top:129.5px;line-height:15px;font-size:12px;font-family:'Liberation Sans',sans-serif;color:#e2e2e2;white-space:nowrap;transform-origin:0 0;">View</span><svg style="position:absolute;left:1657px;top:135px;overflow:visible;" width="8" height="4" viewBox="0 0 8 4"><path d="M0 0 H8 L4.0 4 Z" fill="#e2e2e2"/></svg><svg style="position:absolute;left:1674px;top:133px;overflow:visible;" width="7" height="7" viewBox="0 0 7 7"><path d="M0.5 0.5 L6 6 M2 6 H6 V2" fill="none" stroke="#c0c0c0" stroke-width="1"/></svg><svg style="position:absolute;left:0px;top:147px;overflow:visible;" width="260" height="27" viewBox="0 0 260 27"><path d="M66 3 H160.5 L151.5 27 H56 Z" fill="#474747"/><path d="M16 10 L10 25 M199 10 L193 25" stroke="#5e5e5e" stroke-width="1"/></svg><span style="position:absolute;left:25px;top:154.0px;line-height:16px;font-size:13px;font-family:'Liberation Sans',sans-serif;color:#e6e6e6;white-space:nowrap;transform-origin:0 0;transform:scaleX(0.903);">Start</span><span style="position:absolute;left:73px;top:154.0px;line-height:16px;font-size:13px;font-family:'Liberation Sans',sans-serif;color:#f0f0f0;font-weight:bold;white-space:nowrap;transform-origin:0 0;transform:scaleX(0.941);">Drawing2*</span><svg style="position:absolute;left:141px;top:157px;overflow:visible;" width="9" height="9" viewBox="0 0 9 9"><path d="M0.5 0.5 L8.5 8.5 M8.5 0.5 L0.5 8.5" stroke="#b8b8b8" stroke-width="1.6"/></svg><svg style="position:absolute;left:170px;top:155px;overflow:visible;" width="12" height="12" viewBox="0 0 12 12"><path d="M6 0 V12 M0 6 H12" stroke="#e8e8e8" stroke-width="1.6"/></svg><div style="position:absolute;left:0px;top:180px;width:246px;height:20px;background:#373737;clip-path:polygon(0 0,243px 0,246px 3px,246px 100%,0 100%);"></div><svg style="position:absolute;left:242px;top:200px;overflow:visible;" width="4" height="3" viewBox="0 0 4 3"><path d="M0 0 H4 V3 Z" fill="#373737"/></svg><svg style="position:absolute;left:6px;top:186px;overflow:visible;" width="4" height="10" viewBox="0 0 4 10"><rect x="0.0" y="0.0" width="1.2" height="1.2" fill="#bbb"/><rect x="2.5" y="0.0" width="1.2" height="1.2" fill="#bbb"/><rect x="0.0" y="2.5" width="1.2" height="1.2" fill="#bbb"/><rect x="2.5" y="2.5" width="1.2" height="1.2" fill="#bbb"/><rect x="0.0" y="5.0" width="1.2" height="1.2" fill="#bbb"/><rect x="2.5" y="5.0" width="1.2" height="1.2" fill="#bbb"/><rect x="0.0" y="7.5" width="1.2" height="1.2" fill="#bbb"/><rect x="2.5" y="7.5" width="1.2" height="1.2" fill="#bbb"/></svg><span style="position:absolute;left:15px;top:181.5px;line-height:15px;font-size:12px;font-family:'Liberation Sans',sans-serif;color:#e8e8e8;white-space:nowrap;transform-origin:0 0;transform:scaleX(0.840);">PROPERTIES</span><div style="position:absolute;left:0px;top:995px;width:246px;height:1px;background:#3a3a3a;"></div><div style="position:absolute;left:18px;top:212px;width:145px;height:23px;background:#5a5a5a;box-sizing:border-box;border:1px solid #404040;"></div><span style="position:absolute;left:21px;top:215.5px;line-height:16px;font-size:13px;font-family:'Liberation Sans',sans-serif;color:#e4e4e4;white-space:nowrap;transform-origin:0 0;transform:scaleX(0.920);">No selection</span><svg style="position:absolute;left:151px;top:222px;overflow:visible;" width="8" height="4" viewBox="0 0 8 4"><path d="M0 0 H8 L4.0 4 Z" fill="#d8d8d8"/></svg><svg style="position:absolute;left:171px;top:216px;overflow:visible;" width="16" height="16" viewBox="0 0 16 16"><rect x="0" y="3" width="8" height="8" fill="#aaa"/><rect x="5" y="8" width="8" height="8" fill="#c8c8c8"/><path d="M12 0 V7 M8.5 3.5 H15.5" stroke="#d8d8d8" stroke-width="1.6"/></svg><svg style="position:absolute;left:195px;top:216px;overflow:visible;" width="15" height="16" viewBox="0 0 15 16"><rect x="0.5" y="0.5" width="13" height="10" fill="none" stroke="#aaa" stroke-dasharray="2 1"/><rect x="2" y="2" width="9" height="7" fill="#aaa"/><path d="M9 5 V16 L11 13.5 L13 16.5 L14.5 15.5 L12.5 12.5 H15 Z" fill="#e8e8e8"/></svg><svg style="position:absolute;left:219px;top:216px;overflow:visible;" width="16" height="16" viewBox="0 0 16 16"><path d="M0 3 V14 L2.5 11.5 L4.5 15 L6 14 L4 10.5 H7 Z" fill="#e8e8e8"/><path d="M8 0 L6 4 H9 L7 7" fill="none" stroke="#bbb" stroke-width="1.3"/><rect x="7" y="7" width="9" height="9" fill="#eee"/><path d="M9 9.5 H14 M9 12 H14 M9 14.5 H14" stroke="#777"/></svg><div style="position:absolute;left:17px;top:239px;width:218px;height:20px;background:#363636;"></div><span style="position:absolute;left:24px;top:241.0px;line-height:16px;font-size:13px;font-family:'Liberation Sans',sans-serif;color:#c4c4c4;font-weight:bold;white-space:nowrap;transform-origin:0 0;transform:scaleX(0.925);">General</span><svg style="position:absolute;left:221px;top:245px;overflow:visible;" width="5" height="8" viewBox="0 0 5 8"><path d="M5 0 V8 L0 4 Z" fill="#d8d8d8"/></svg><div style="position:absolute;left:17px;top:258px;width:218px;height:1px;background:#3a3a3a;"></div><div style="position:absolute;left:17px;top:262px;width:218px;height:20px;background:#363636;"></div><span style="position:absolute;left:24px;top:264.0px;line-height:16px;font-size:13px;font-family:'Liberation Sans',sans-serif;color:#e0e0e0;font-weight:bold;white-space:nowrap;transform-origin:0 0;transform:scaleX(0.893);">3D Visualization</span><svg style="position:absolute;left:218px;top:270px;overflow:visible;" width="9" height="5" viewBox="0 0 9 5"><path d="M0 0 H9 L4.5 5 Z" fill="#d8d8d8"/></svg><div style="position:absolute;left:34px;top:281px;width:201px;height:19px;background:#3a3a3a;"></div><div style="position:absolute;left:35px;top:282px;width:88px;height:18px;background:#474747;"></div><div style="position:absolute;left:124px;top:282px;width:111px;height:18px;background:#474747;"></div><span style="position:absolute;left:41px;top:284.5px;line-height:15px;font-size:12px;font-family:'Liberation Sans',sans-serif;color:#cfcfcf;white-space:nowrap;transform-origin:0 0;transform:scaleX(1.026);">Material</span><span style="position:absolute;left:126px;top:284.5px;line-height:15px;font-size:12px;font-family:'Liberation Sans',sans-serif;color:#dedede;white-space:nowrap;transform-origin:0 0;transform:scaleX(0.949);">ByLayer</span><div style="position:absolute;left:34px;top:300px;width:201px;height:1px;background:#3a3a3a;"></div><div style="position:absolute;left:17px;top:304px;width:218px;height:20px;background:#363636;"></div><span style="position:absolute;left:24px;top:306.0px;line-height:16px;font-size:13px;font-family:'Liberation Sans',sans-serif;color:#e0e0e0;font-weight:bold;white-space:nowrap;transform-origin:0 0;transform:scaleX(0.879);">Plot style</span><svg style="position:absolute;left:218px;top:312px;overflow:visible;" width="9" height="5" viewBox="0 0 9 5"><path d="M0 0 H9 L4.5 5 Z" fill="#d8d8d8"/></svg><div style="position:absolute;left:34px;top:323px;width:201px;height:19px;background:#3a3a3a;"></div><div style="position:absolute;left:35px;top:324px;width:88px;height:18px;background:#474747;"></div><div style="position:absolute;left:124px;top:324px;width:111px;height:18px;background:#474747;"></div><span style="position:absolute;left:41px;top:326.5px;line-height:15px;font-size:12px;font-family:'Liberation Sans',sans-serif;color:#cfcfcf;white-space:nowrap;transform-origin:0 0;transform:scaleX(0.982);">Plot style</span><span style="position:absolute;left:126px;top:326.5px;line-height:15px;font-size:12px;font-family:'Liberation Sans',sans-serif;color:#8c8c8c;white-space:nowrap;transform-origin:0 0;transform:scaleX(0.956);">ByColor</span><div style="position:absolute;left:34px;top:342px;width:201px;height:19px;background:#3a3a3a;"></div><div style="position:absolute;left:35px;top:343px;width:88px;height:18px;background:#474747;"></div><div style="position:absolute;left:124px;top:343px;width:111px;height:18px;background:#474747;"></div><span style="position:absolute;left:41px;top:345.5px;line-height:15px;font-size:12px;font-family:'Liberation Sans',sans-serif;color:#cfcfcf;white-space:nowrap;transform-origin:0 0;transform:scaleX(1.014);">Plot style tab...</span><span style="position:absolute;left:126px;top:345.5px;line-height:15px;font-size:12px;font-family:'Liberation Sans',sans-serif;color:#f4f4f4;white-space:nowrap;transform-origin:0 0;transform:scaleX(1.004);">None</span><div style="position:absolute;left:34px;top:361px;width:201px;height:19px;background:#3a3a3a;"></div><div style="position:absolute;left:35px;top:362px;width:88px;height:18px;background:#474747;"></div><div style="position:absolute;left:124px;top:362px;width:111px;height:18px;background:#474747;"></div><span style="position:absolute;left:41px;top:364.5px;line-height:15px;font-size:12px;font-family:'Liberation Sans',sans-serif;color:#cfcfcf;white-space:nowrap;transform-origin:0 0;transform:scaleX(1.027);">Plot table att...</span><span style="position:absolute;left:126px;top:364.5px;line-height:15px;font-size:12px;font-family:'Liberation Sans',sans-serif;color:#8c8c8c;white-space:nowrap;transform-origin:0 0;transform:scaleX(1.065);">Model</span><div style="position:absolute;left:34px;top:380px;width:201px;height:19px;background:#3a3a3a;"></div><div style="position:absolute;left:35px;top:381px;width:88px;height:18px;background:#474747;"></div><div style="position:absolute;left:124px;top:381px;width:111px;height:18px;background:#474747;"></div><span style="position:absolute;left:41px;top:383.5px;line-height:15px;font-size:12px;font-family:'Liberation Sans',sans-serif;color:#cfcfcf;white-space:nowrap;transform-origin:0 0;transform:scaleX(0.997);">Plot table type</span><span style="position:absolute;left:126px;top:383.5px;line-height:15px;font-size:12px;font-family:'Liberation Sans',sans-serif;color:#8c8c8c;white-space:nowrap;transform-origin:0 0;transform:scaleX(1.006);">Not available</span><div style="position:absolute;left:34px;top:399px;width:201px;height:1px;background:#3a3a3a;"></div><div style="position:absolute;left:17px;top:403px;width:218px;height:20px;background:#363636;"></div><span style="position:absolute;left:24px;top:405.0px;line-height:16px;font-size:13px;font-family:'Liberation Sans',sans-serif;color:#e0e0e0;font-weight:bold;white-space:nowrap;transform-origin:0 0;transform:scaleX(0.946);">View</span><svg style="position:absolute;left:218px;top:411px;overflow:visible;" width="9" height="5" viewBox="0 0 9 5"><path d="M0 0 H9 L4.5 5 Z" fill="#d8d8d8"/></svg><div style="position:absolute;left:34px;top:422px;width:201px;height:19px;background:#3a3a3a;"></div><div style="position:absolute;left:35px;top:423px;width:88px;height:18px;background:#474747;"></div><div style="position:absolute;left:124px;top:423px;width:111px;height:18px;background:#474747;"></div><span style="position:absolute;left:41px;top:425.5px;line-height:15px;font-size:12px;font-family:'Liberation Sans',sans-serif;color:#cfcfcf;white-space:nowrap;transform-origin:0 0;transform:scaleX(0.946);">Center X</span><span style="position:absolute;left:126px;top:425.5px;line-height:15px;font-size:12px;font-family:'Liberation Sans',sans-serif;color:#9a9a9a;white-space:nowrap;transform-origin:0 0;transform:scaleX(0.915);">191.7579</span><div style="position:absolute;left:34px;top:441px;width:201px;height:19px;background:#3a3a3a;"></div><div style="position:absolute;left:35px;top:442px;width:88px;height:18px;background:#474747;"></div><div style="position:absolute;left:124px;top:442px;width:111px;height:18px;background:#474747;"></div><span style="position:absolute;left:41px;top:444.5px;line-height:15px;font-size:12px;font-family:'Liberation Sans',sans-serif;color:#cfcfcf;white-space:nowrap;transform-origin:0 0;transform:scaleX(0.929);">Center Y</span><span style="position:absolute;left:126px;top:444.5px;line-height:15px;font-size:12px;font-family:'Liberation Sans',sans-serif;color:#9a9a9a;white-space:nowrap;transform-origin:0 0;transform:scaleX(0.917);">88.6659</span><div style="position:absolute;left:34px;top:460px;width:201px;height:19px;background:#3a3a3a;"></div><div style="position:absolute;left:35px;top:461px;width:88px;height:18px;background:#474747;"></div><div style="position:absolute;left:124px;top:461px;width:111px;height:18px;background:#474747;"></div><span style="position:absolute;left:41px;top:463.5px;line-height:15px;font-size:12px;font-family:'Liberation Sans',sans-serif;color:#cfcfcf;white-space:nowrap;transform-origin:0 0;transform:scaleX(0.938);">Center Z</span><span style="position:absolute;left:126px;top:463.5px;line-height:15px;font-size:12px;font-family:'Liberation Sans',sans-serif;color:#9a9a9a;white-space:nowrap;transform-origin:0 0;transform:scaleX(1.017);">0</span><div style="position:absolute;left:34px;top:479px;width:201px;height:19px;background:#3a3a3a;"></div><div style="position:absolute;left:35px;top:480px;width:88px;height:18px;background:#474747;"></div><div style="position:absolute;left:124px;top:480px;width:111px;height:18px;background:#474747;"></div><span style="position:absolute;left:41px;top:482.5px;line-height:15px;font-size:12px;font-family:'Liberation Sans',sans-serif;color:#cfcfcf;white-space:nowrap;transform-origin:0 0;transform:scaleX(1.032);">Height</span><span style="position:absolute;left:126px;top:482.5px;line-height:15px;font-size:12px;font-family:'Liberation Sans',sans-serif;color:#9a9a9a;white-space:nowrap;transform-origin:0 0;transform:scaleX(0.915);">299.1705</span><div style="position:absolute;left:34px;top:498px;width:201px;height:19px;background:#3a3a3a;"></div><div style="position:absolute;left:35px;top:499px;width:88px;height:18px;background:#474747;"></div><div style="position:absolute;left:124px;top:499px;width:111px;height:18px;background:#474747;"></div><span style="position:absolute;left:41px;top:501.5px;line-height:15px;font-size:12px;font-family:'Liberation Sans',sans-serif;color:#cfcfcf;white-space:nowrap;transform-origin:0 0;transform:scaleX(1.036);">Width</span><span style="position:absolute;left:126px;top:501.5px;line-height:15px;font-size:12px;font-family:'Liberation Sans',sans-serif;color:#9a9a9a;white-space:nowrap;transform-origin:0 0;transform:scaleX(0.915);">504.5766</span><div style="position:absolute;left:34px;top:517px;width:201px;height:1px;background:#3a3a3a;"></div><div style="position:absolute;left:17px;top:521px;width:218px;height:20px;background:#363636;"></div><span style="position:absolute;left:24px;top:523.0px;line-height:16px;font-size:13px;font-family:'Liberation Sans',sans-serif;color:#e0e0e0;font-weight:bold;white-space:nowrap;transform-origin:0 0;transform:scaleX(0.893);">Misc</span><svg style="position:absolute;left:221px;top:527px;overflow:visible;" width="5" height="8" viewBox="0 0 5 8"><path d="M5 0 V8 L0 4 Z" fill="#d8d8d8"/></svg><span style="position:absolute;left:255px;top:184.5px;line-height:15px;font-size:12px;font-family:'Liberation Sans',sans-serif;color:#e6e6e6;white-space:nowrap;transform-origin:0 0;transform:scaleX(1.020);">[−][Top][2D Wireframe]</span><div style="position:absolute;left:1573px;top:195px;width:9px;height:2px;background:#e0e0e0;"></div><svg style="position:absolute;left:1592px;top:188px;overflow:visible;" width="11" height="11" viewBox="0 0 11 11"><rect x="0.75" y="3.75" width="7" height="6.5" fill="none" stroke="#e0e0e0" stroke-width="1.5"/><path d="M3 3.5 V0.75 H10.25 V7 H8" fill="none" stroke="#e0e0e0" stroke-width="1.5"/></svg><svg style="position:absolute;left:1612px;top:188px;overflow:visible;" width="10" height="10" viewBox="0 0 10 10"><path d="M1 1 L9 9 M9 1 L1 9" stroke="#f0f0f0" stroke-width="2"/></svg><svg style="position:absolute;left:405px;top:760px;overflow:visible;" width="85" height="80" viewBox="0 0 85 80"><path d="M11.5 21 V71 M11.5 71.5 H62" stroke="#e8e8e8" stroke-width="1.3" fill="none"/><rect x="7.5" y="66.5" width="9.5" height="9.5" fill="none" stroke="#e8e8e8" stroke-width="1.2"/><path d="M13 4 L19.5 11 L26 4 M19.5 11 V17" stroke="#e8e8e8" stroke-width="1.3" fill="none"/><path d="M66 57 L79 70 M79 57 L66 70" stroke="#e8e8e8" stroke-width="1.3"/></svg><svg style="position:absolute;left:1490px;top:223px;overflow:visible;" width="122" height="122" viewBox="0 0 122 122"><circle cx="61" cy="61" r="54" fill="none" stroke="#6e6e6e" stroke-opacity="0.52" stroke-width="13"/><rect x="36" y="36" width="50" height="50" fill="#a3a3a3"/><rect x="45" y="45" width="32" height="32" fill="#959595"/><text x="50" y="66" textLength="23" lengthAdjust="spacingAndGlyphs" font-family="Liberation Sans" font-weight="bold" font-size="13" fill="#4e4e4e">TOP</text><g font-family="Liberation Sans" font-weight="bold" font-size="20" fill="#a4a4a4" text-anchor="middle"><text x="61" y="11">N</text><text x="61" y="124">S</text><text x="5" y="68">W</text><text x="118" y="68">E</text></g></svg><div style="position:absolute;left:1527px;top:371px;width:48px;height:18px;background:#8e8e8e;border-radius:4px;box-shadow:inset 0 0 0 1px #9a9a9a;"></div><span style="position:absolute;left:1532px;top:372.0px;line-height:15px;font-size:12px;font-family:'Liberation Sans',sans-serif;color:#4e4e4e;white-space:nowrap;transform-origin:0 0;transform:scaleX(0.850);">WCS</span><svg style="position:absolute;left:1559px;top:377px;overflow:visible;" width="9" height="6" viewBox="0 0 9 6"><path d="M0.5 0.5 H8.5 L4.5 5.5 Z" fill="none" stroke="#5a5a5a" stroke-width="1"/></svg><svg style="position:absolute;left:1598px;top:413px;overflow:visible;" width="32" height="213" viewBox="0 0 32 213"><rect x="0" y="0" width="32" height="213" rx="3" fill="#676767"/><circle cx="25.5" cy="6" r="3" fill="none" stroke="#4e4e4e" stroke-width="0.8"/><circle cx="25.5" cy="206.5" r="3" fill="none" stroke="#4e4e4e" stroke-width="0.8"/><g fill="none" stroke="#4e4e4e" stroke-width="1.1"><path d="M16 20 A10.5 10.5 0 1 0 26.5 30.5 V23 A3 3 0 0 0 23.5 20 Z"/><circle cx="16" cy="29.5" r="5.5"/><path d="M9 37 L12 34 M23 37 L20 34"/><path d="M8.5 76 C7 73 6 71 7 70 C8 69 9 70 10 72 V63 C10 61.5 12 61.5 12 63 V70 M12 69 V60.5 C12 59 14 59 14 60.5 V69 M14 69 V61 C14 59.5 16 59.5 16 61 V69 M16 69 V63 C16 61.5 18 61.5 18 63 V72 L19.5 69 C20.5 67.5 22 68.5 21.5 70 L19 77 C18 80 16 82 13 82 C10.5 82 9.5 79 8.5 76 Z"/><path d="M5 90 L17 102 M5 102 L17 90 M5 90 H8.5 M5 90 V93.5 M5 102 V98.5 M5 102 H8.5 M17 90 H13.5 M17 90 V93.5"/><circle cx="21" cy="104" r="4"/><path d="M24 107 L27.5 110.5" stroke-width="2"/><path d="M16 128 V150 M12.5 132 L16 128 L19.5 132" /><rect x="14" y="144" width="4" height="6"/><ellipse cx="16" cy="140" rx="11" ry="4"/><path d="M6 140 L4.5 143 M6 140 L8.5 142.5"/><rect x="4.5" y="170.5" width="6" height="6"/><rect x="12.5" y="170.5" width="6" height="6"/><rect x="20.5" y="170.5" width="6" height="6"/><rect x="4.5" y="180" width="16" height="13"/></g><path d="M9.5 182.5 L16 186.5 L9.5 190.5 Z" fill="#4e4e4e"/><g fill="#4e4e4e"><path d="M13 49 H19 L16 52 Z"/><path d="M13 119.5 H19 L16 122.5 Z"/><path d="M13 157.5 H19 L16 160.5 Z"/></g><path d="M2 56.5 H30 M2 164.5 H30" stroke="#747474" stroke-width="0.8"/></svg><div style="position:absolute;left:588px;top:973px;width:58px;height:25px;background:#2f2f2f;"></div><svg style="position:absolute;left:592px;top:977px;overflow:visible;" width="5" height="14" viewBox="0 0 5 14"><rect x="0" y="0.0" width="1.5" height="1.5" fill="#c8c8c8"/><rect x="3" y="0.0" width="1.5" height="1.5" fill="#c8c8c8"/><rect x="0" y="2.5" width="1.5" height="1.5" fill="#c8c8c8"/><rect x="3" y="2.5" width="1.5" height="1.5" fill="#c8c8c8"/><rect x="0" y="5.0" width="1.5" height="1.5" fill="#c8c8c8"/><rect x="3" y="5.0" width="1.5" height="1.5" fill="#c8c8c8"/><rect x="0" y="7.5" width="1.5" height="1.5" fill="#c8c8c8"/><rect x="3" y="7.5" width="1.5" height="1.5" fill="#c8c8c8"/><rect x="0" y="10.0" width="1.5" height="1.5" fill="#c8c8c8"/><rect x="3" y="10.0" width="1.5" height="1.5" fill="#c8c8c8"/><rect x="0" y="12.5" width="1.5" height="1.5" fill="#c8c8c8"/><rect x="3" y="12.5" width="1.5" height="1.5" fill="#c8c8c8"/></svg><svg style="position:absolute;left:604px;top:980px;overflow:visible;" width="9" height="9" viewBox="0 0 9 9"><path d="M0.5 0.5 L8.5 8.5 M8.5 0.5 L0.5 8.5" stroke="#d0d0d0" stroke-width="1.5"/></svg><svg style="position:absolute;left:625px;top:977px;overflow:visible;" width="15" height="15" viewBox="0 0 15 15"><path d="M1 14 L8 7" stroke="#c8c8c8" stroke-width="2.5"/><path d="M7 8 A4.5 4.5 0 0 1 13 2 L10.5 4.5 L11.5 5.5 L14 3 A4.5 4.5 0 0 1 8 9 Z" fill="#c8c8c8"/></svg><div style="position:absolute;left:646px;top:973px;width:648px;height:25px;background:#bfbfbf;border-radius:2px;"></div><svg style="position:absolute;left:650px;top:979px;overflow:visible;" width="17" height="12" viewBox="0 0 17 12"><rect x="0.5" y="0.5" width="14" height="11" fill="none" stroke="#4a4a4a"/><rect x="0.5" y="0.5" width="14" height="2" fill="#4a4a4a"/><path d="M3 5 L5 7 L3 9 M6 9 H9" stroke="#4a4a4a" fill="none"/></svg><svg style="position:absolute;left:669px;top:983px;overflow:visible;" width="7" height="4" viewBox="0 0 7 4"><path d="M0 0 H7 L3.5 4 Z" fill="#4a4a4a"/></svg><span style="position:absolute;left:683px;top:978.5px;line-height:15px;font-size:12px;font-family:'Liberation Mono',sans-serif;color:#6a6a6a;font-style:italic;white-space:nowrap;transform-origin:0 0;transform:scaleX(0.970);">Type a command</span><svg style="position:absolute;left:1282px;top:983px;overflow:visible;" width="8" height="4" viewBox="0 0 8 4"><path d="M0 4 L4 0 L8 4 Z" fill="#4a4a4a"/></svg><svg style="position:absolute;left:0px;top:1003px;overflow:visible;" width="260" height="29" viewBox="0 0 260 29"><path d="M15 3 H76 L68 27 H8 Z" fill="#474747"/><path d="M142 7 L136 24 M210 7 L204 24 M250 7 L244 24" stroke="#5a5a5a"/></svg><span style="position:absolute;left:25px;top:1008.0px;line-height:16px;font-size:13px;font-family:'Liberation Sans',sans-serif;color:#f0f0f0;font-weight:bold;white-space:nowrap;transform-origin:0 0;transform:scaleX(0.953);">Model</span><span style="position:absolute;left:84px;top:1008.0px;line-height:16px;font-size:13px;font-family:'Liberation Sans',sans-serif;color:#e0e0e0;white-space:nowrap;transform-origin:0 0;transform:scaleX(0.903);">Layout1</span><span style="position:absolute;left:151px;top:1008.0px;line-height:16px;font-size:13px;font-family:'Liberation Sans',sans-serif;color:#e0e0e0;white-space:nowrap;transform-origin:0 0;transform:scaleX(0.903);">Layout2</span><svg style="position:absolute;left:218px;top:1010px;overflow:visible;" width="12" height="12" viewBox="0 0 12 12"><path d="M6 0 V12 M0 6 H12" stroke="#e8e8e8" stroke-width="1.6"/></svg><div style="position:absolute;left:1638px;top:180px;width:282px;height:20px;background:#373737;clip-path:polygon(3px 0,100% 0,100% 100%,0 100%,0 3px);"></div><svg style="position:absolute;left:1638px;top:200px;overflow:visible;" width="4" height="3" viewBox="0 0 4 3"><path d="M0 0 H4 L0 3 Z" fill="#373737"/></svg><svg style="position:absolute;left:1645px;top:186px;overflow:visible;" width="4" height="10" viewBox="0 0 4 10"><rect x="0.0" y="0.0" width="1.2" height="1.2" fill="#bbb"/><rect x="2.5" y="0.0" width="1.2" height="1.2" fill="#bbb"/><rect x="0.0" y="2.5" width="1.2" height="1.2" fill="#bbb"/><rect x="2.5" y="2.5" width="1.2" height="1.2" fill="#bbb"/><rect x="0.0" y="5.0" width="1.2" height="1.2" fill="#bbb"/><rect x="2.5" y="5.0" width="1.2" height="1.2" fill="#bbb"/><rect x="0.0" y="7.5" width="1.2" height="1.2" fill="#bbb"/><rect x="2.5" y="7.5" width="1.2" height="1.2" fill="#bbb"/></svg><span style="position:absolute;left:1653px;top:181.5px;line-height:15px;font-size:12px;font-family:'Liberation Sans',sans-serif;color:#e8e8e8;white-space:nowrap;transform-origin:0 0;transform:scaleX(0.879);">LAYER PROPERTIES MANAGER</span><div style="position:absolute;left:1638px;top:995px;width:282px;height:1px;background:#3a3a3a;"></div><span style="position:absolute;left:1643px;top:212.0px;line-height:15px;font-size:12px;font-family:'Liberation Sans',sans-serif;color:#e0e0e0;white-space:nowrap;transform-origin:0 0;transform:scaleX(0.977);">Current layer: 0</span><div style="position:absolute;left:1795px;top:207px;width:125px;height:16px;background:#555555;"></div><span style="position:absolute;left:1796px;top:207.5px;line-height:15px;font-size:12px;font-family:'Liberation Sans',sans-serif;color:#9c9c9c;white-space:nowrap;transform-origin:0 0;transform:scaleX(0.954);">Search for layer</span><svg style="position:absolute;left:1905px;top:209px;overflow:visible;" width="13" height="13" viewBox="0 0 13 13"><circle cx="5" cy="5" r="4" fill="none" stroke="#e0e0e0" stroke-width="1.3"/><path d="M8 8 L12 12" stroke="#e0e0e0" stroke-width="1.5"/></svg><svg style="position:absolute;left:1641px;top:233px;overflow:visible;" width="16" height="17" viewBox="0 0 16 17"><path d="M0 0 H5 L6 1.5 H10 V3 H0 Z M0 3.5 H12 V11 H0 Z" fill="#d8d8d8"/><path d="M6 10 H16 L12 14 V17 H10 V14 Z" fill="#d8d8d8" stroke="#474747" stroke-width="0.7"/></svg><svg style="position:absolute;left:1665px;top:234px;overflow:visible;" width="15" height="14" viewBox="0 0 15 14"><path d="M0 0 H5 L6.5 2 H14 V4 H0 Z M0 4.5 H14 V14 H0 Z" fill="#d8d8d8"/></svg><div style="position:absolute;left:1687px;top:232px;width:1px;height:17px;background:#2f2f2f;"></div><svg style="position:absolute;left:1696px;top:233px;overflow:visible;" width="16" height="17" viewBox="0 0 16 17"><path d="M5 0 H14 L9 4 H0 Z" fill="#d8d8d8"/><path d="M5 4.5 H12 L9 7 H0 Z" fill="#9a9a9a"/><rect x="7" y="5" width="8" height="12" fill="#d8d8d8" stroke="#474747" stroke-width="0.6"/><rect x="9" y="7" width="4" height="3" fill="#474747"/><path d="M9 13 H13" stroke="#474747"/></svg><svg style="position:absolute;left:1723px;top:233px;overflow:visible;" width="16" height="17" viewBox="0 0 16 17"><path d="M5 0 H14 L9 4 H0 Z" fill="#d8d8d8"/><path d="M5 4.5 H14 L9 8 H0 Z M5 8.5 H14 L9 12 H0 Z" fill="#d8d8d8" opacity="0.9"/><path d="M12 9 L13 12 L16 12.5 L13 14 L12 17 L11 14 L8 12.5 L11 12 Z" fill="#d8d8d8"/></svg><svg style="position:absolute;left:1746px;top:233px;overflow:visible;" width="16" height="17" viewBox="0 0 16 17"><path d="M5 0 H14 L9 4 H0 Z" fill="#d8d8d8"/><path d="M5 4.5 H14 L9 8 H0 Z M5 8.5 H14 L9 12 H0 Z" fill="#d8d8d8" opacity="0.9"/><circle cx="12" cy="13" r="3.5" fill="none" stroke="#d8d8d8"/><path d="M12 9 V17 M8.5 13 H15.5 M9.5 10.5 L14.5 15.5 M14.5 10.5 L9.5 15.5" stroke="#d8d8d8" stroke-width="0.8"/></svg><svg style="position:absolute;left:1769px;top:233px;overflow:visible;" width="16" height="17" viewBox="0 0 16 17"><path d="M5 0 H14 L9 4 H0 Z" fill="#d8d8d8"/><path d="M5 4.5 H14 L9 8 H0 Z M5 8.5 H14 L9 12 H0 Z" fill="#d8d8d8" opacity="0.9"/><path d="M9 10 L15 16 M15 10 L9 16" stroke="#d8d8d8" stroke-width="1.6"/></svg><svg style="position:absolute;left:1792px;top:233px;overflow:visible;" width="16" height="17" viewBox="0 0 16 17"><path d="M5 0 H14 L9 4 H0 Z" fill="#d8d8d8"/><path d="M5 4.5 H14 L9 8 H0 Z M5 8.5 H14 L9 12 H0 Z" fill="#d8d8d8" opacity="0.9"/><path d="M8 12 L10.5 15 L15 9" fill="none" stroke="#d8d8d8" stroke-width="1.5"/></svg><svg style="position:absolute;left:1849px;top:234px;overflow:visible;" width="16" height="16" viewBox="0 0 16 16"><path d="M2 7 A6 6 0 0 1 13 4 M14 9 A6 6 0 0 1 3 12" fill="none" stroke="#a8a8a8" stroke-width="2.2"/><path d="M11 1 L15 5 L10 6 Z M5 15 L1 11 L6 10 Z" fill="#a8a8a8"/></svg><svg style="position:absolute;left:1872px;top:234px;overflow:visible;" width="16" height="15" viewBox="0 0 16 15"><rect x="0" y="0" width="9" height="9" fill="#d8d8d8"/><path d="M4 11 H16 L12 15 H0 Z" fill="#9a9a9a"/></svg><svg style="position:absolute;left:1894px;top:233px;overflow:visible;" width="16" height="16" viewBox="0 0 16 16"><g fill="#d8d8d8"><circle cx="8" cy="8" r="5.5"/><rect x="6.5" y="0" width="3" height="16" transform="rotate(0 8 8)"/><rect x="6.5" y="0" width="3" height="16" transform="rotate(45 8 8)"/><rect x="6.5" y="0" width="3" height="16" transform="rotate(90 8 8)"/><rect x="6.5" y="0" width="3" height="16" transform="rotate(135 8 8)"/></g><circle cx="8" cy="8" r="2.5" fill="#474747"/></svg><div style="position:absolute;left:1638px;top:252px;width:26px;height:707px;background:#474747;box-sizing:border-box;border:1px solid #3a3a3a;"></div><svg style="position:absolute;left:1648px;top:259px;overflow:visible;" width="13" height="10" viewBox="0 0 13 10"><path d="M1 1 L5 5 L1 9 M7 1 L11 5 L7 9" fill="none" stroke="#e0e0e0" stroke-width="2"/></svg><svg style="position:absolute;left:1648px;top:943px;overflow:visible;" width="13" height="10" viewBox="0 0 13 10"><path d="M1 1 L5 5 L1 9 M7 1 L11 5 L7 9" fill="none" stroke="#e0e0e0" stroke-width="2"/></svg><div style="position:absolute;left:1668px;top:252px;width:252px;height:23px;background:#3e3e3e;"></div><div style="position:absolute;left:1691px;top:252px;width:1px;height:23px;background:#363636;"></div><div style="position:absolute;left:1838px;top:252px;width:1px;height:23px;background:#363636;"></div><div style="position:absolute;left:1862px;top:252px;width:1px;height:23px;background:#363636;"></div><div style="position:absolute;left:1883px;top:252px;width:1px;height:23px;background:#363636;"></div><div style="position:absolute;left:1897px;top:252px;width:1px;height:23px;background:#363636;"></div><div style="position:absolute;left:1916px;top:252px;width:1px;height:23px;background:#363636;"></div><div style="position:absolute;left:1783px;top:252px;width:2px;height:690px;background:#3a3a3a;"></div><span style="position:absolute;left:1672px;top:256.5px;line-height:15px;font-size:12px;font-family:'Liberation Sans',sans-serif;color:#dcdcdc;white-space:nowrap;transform-origin:0 0;transform:scaleX(0.877);">S...</span><span style="position:absolute;left:1696px;top:256.5px;line-height:15px;font-size:12px;font-family:'Liberation Sans',sans-serif;color:#dcdcdc;white-space:nowrap;transform-origin:0 0;transform:scaleX(1.024);">Name</span><svg style="position:absolute;left:1775px;top:261px;overflow:visible;" width="8" height="5" viewBox="0 0 8 5"><path d="M0 5 L4 0 L8 5 Z" fill="#dcdcdc"/></svg><span style="position:absolute;left:1789px;top:256.5px;line-height:15px;font-size:12px;font-family:'Liberation Sans',sans-serif;color:#dcdcdc;white-space:nowrap;transform-origin:0 0;transform:scaleX(1.039);">Color</span><span style="position:absolute;left:1843px;top:256.5px;line-height:15px;font-size:12px;font-family:'Liberation Sans',sans-serif;color:#dcdcdc;white-space:nowrap;transform-origin:0 0;transform:scaleX(0.920);">O...</span><span style="position:absolute;left:1866px;top:256.5px;line-height:15px;font-size:12px;font-family:'Liberation Sans',sans-serif;color:#dcdcdc;white-space:nowrap;transform-origin:0 0;transform:scaleX(0.987);">F...</span><span style="position:absolute;left:1887px;top:256.5px;line-height:15px;font-size:12px;font-family:'Liberation Sans',sans-serif;color:#dcdcdc;white-space:nowrap;transform-origin:0 0;transform:scaleX(0.898);">P.</span><span style="position:absolute;left:1901px;top:256.5px;line-height:15px;font-size:12px;font-family:'Liberation Sans',sans-serif;color:#dcdcdc;white-space:nowrap;transform-origin:0 0;transform:scaleX(0.887);">L...</span><div style="position:absolute;left:1668px;top:275px;width:115px;height:18px;background:#3a3a3a;"></div><div style="position:absolute;left:1785px;top:275px;width:135px;height:18px;background:#474747;"></div><svg style="position:absolute;left:1671px;top:279px;overflow:visible;" width="12" height="10" viewBox="0 0 12 10"><path d="M1 5 L4.5 8.5 L11 1.5" fill="none" stroke="#a8a8a8" stroke-width="1.8"/></svg><span style="position:absolute;left:1695px;top:276.5px;line-height:15px;font-size:12px;font-family:'Liberation Sans',sans-serif;color:#e8e8e8;white-space:nowrap;transform-origin:0 0;transform:scaleX(1.017);">0</span><div style="position:absolute;left:1668px;top:293px;width:115px;height:18px;background:#8c8c8c;"></div><div style="position:absolute;left:1785px;top:293px;width:135px;height:18px;background:#8c8c8c;"></div><svg style="position:absolute;left:1670px;top:298px;overflow:visible;" width="13" height="8" viewBox="0 0 13 8"><path d="M4 0 H13 L9 8 H0 Z" fill="#b8b8b8"/></svg><span style="position:absolute;left:1695px;top:294.5px;line-height:15px;font-size:12px;font-family:'Liberation Sans',sans-serif;color:#f4f4f4;white-space:nowrap;transform-origin:0 0;transform:scaleX(0.895);">0_Image</span><div style="position:absolute;left:1788px;top:278px;width:12px;height:12px;background:#ffffff;"></div><span style="position:absolute;left:1804px;top:276.5px;line-height:15px;font-size:12px;font-family:'Liberation Sans',sans-serif;color:#f0f0f0;white-space:nowrap;transform-origin:0 0;transform:scaleX(1.064);">white</span><svg style="position:absolute;left:1845px;top:278px;overflow:visible;" width="10" height="13" viewBox="0 0 10 13"><circle cx="5" cy="4.5" r="4.5" fill="#d8d8d8"/><rect x="3" y="8" width="4" height="4" rx="1" fill="#d8d8d8"/></svg><svg style="position:absolute;left:1866px;top:278px;overflow:visible;" width="13" height="13" viewBox="0 0 13 13"><circle cx="6.5" cy="6.5" r="3.5" fill="#d8d8d8"/><path d="M6.5 0 V2 M6.5 11 V13 M0 6.5 H2 M11 6.5 H13 M2 2 L3 3 M10 10 L11 11 M2 11 L3 10 M10 3 L11 2" stroke="#d8d8d8" stroke-width="1"/></svg><svg style="position:absolute;left:1884px;top:278px;overflow:visible;" width="12" height="12" viewBox="0 0 12 12"><rect x="3" y="0" width="6" height="3" fill="#d8d8d8"/><rect x="0" y="3.5" width="12" height="5" fill="#d8d8d8"/><rect x="2.5" y="8" width="7" height="4" fill="#d8d8d8" stroke="#474747" stroke-width="0.6"/></svg><svg style="position:absolute;left:1901px;top:277px;overflow:visible;" width="12" height="13" viewBox="0 0 12 13"><rect x="0" y="6" width="8" height="7" fill="#d8d8d8"/><path d="M5.5 6 V3.5 A2.8 2.8 0 0 1 11 3.5 V5" fill="none" stroke="#d8d8d8" stroke-width="1.4"/></svg><div style="position:absolute;left:1788px;top:296px;width:12px;height:12px;background:#ffffff;"></div><span style="position:absolute;left:1804px;top:294.5px;line-height:15px;font-size:12px;font-family:'Liberation Sans',sans-serif;color:#f0f0f0;white-space:nowrap;transform-origin:0 0;transform:scaleX(1.064);">white</span><svg style="position:absolute;left:1845px;top:296px;overflow:visible;" width="10" height="13" viewBox="0 0 10 13"><circle cx="5" cy="4.5" r="4.5" fill="#c8c8c8"/><rect x="3" y="8" width="4" height="4" rx="1" fill="#c8c8c8"/></svg><svg style="position:absolute;left:1866px;top:296px;overflow:visible;" width="13" height="13" viewBox="0 0 13 13"><circle cx="6.5" cy="6.5" r="3.5" fill="#c8c8c8"/><path d="M6.5 0 V2 M6.5 11 V13 M0 6.5 H2 M11 6.5 H13 M2 2 L3 3 M10 10 L11 11 M2 11 L3 10 M10 3 L11 2" stroke="#c8c8c8" stroke-width="1"/></svg><svg style="position:absolute;left:1884px;top:296px;overflow:visible;" width="12" height="12" viewBox="0 0 12 12"><rect x="3" y="0" width="6" height="3" fill="#c8c8c8"/><rect x="0" y="3.5" width="12" height="5" fill="#c8c8c8"/><rect x="2.5" y="8" width="7" height="4" fill="#c8c8c8" stroke="#474747" stroke-width="0.6"/></svg><svg style="position:absolute;left:1901px;top:295px;overflow:visible;" width="12" height="13" viewBox="0 0 12 13"><rect x="0" y="6" width="8" height="7" fill="#c8c8c8"/><path d="M5.5 6 V3.5 A2.8 2.8 0 0 1 11 3.5 V5" fill="none" stroke="#c8c8c8" stroke-width="1.4"/></svg><div style="position:absolute;left:1668px;top:942px;width:250px;height:17px;background:#f0f0f0;"></div><div style="position:absolute;left:1685px;top:951px;width:47px;height:2px;background:#858585;"></div><svg style="position:absolute;left:1639px;top:976px;overflow:visible;" width="16" height="14" viewBox="0 0 16 14"><path d="M0 0 H5 L6 1.5 H10 V3 H0 Z M0 3.5 H12 V12 H0 Z" fill="#d8d8d8"/><path d="M10 5 L7 10 H10 L8 14" fill="none" stroke="#474747" stroke-width="1.4"/><path d="M11 6 L8 10 H11 L9 14" fill="none" stroke="#d8d8d8" stroke-width="1"/></svg><svg style="position:absolute;left:1658px;top:982px;overflow:visible;" width="6" height="3.5" viewBox="0 0 6 3.5"><path d="M0 0 H6 L3.0 3.5 Z" fill="#d0d0d0"/></svg><span style="position:absolute;left:1672px;top:976.5px;line-height:15px;font-size:12px;font-family:'Liberation Sans',sans-serif;color:#e0e0e0;white-space:nowrap;transform-origin:0 0;transform:scaleX(0.975);">All: 2 layers displayed of 2 total layers</span><div style="position:absolute;left:1319px;top:1005px;width:47px;height:23px;background:#3c3c3c;"></div><div style="position:absolute;left:1370px;top:1005px;width:63px;height:23px;background:#3c3c3c;"></div><div style="position:absolute;left:1436px;top:1005px;width:104px;height:23px;background:#3c3c3c;"></div><div style="position:absolute;left:1542px;top:1005px;width:62px;height:23px;background:#3c3c3c;"></div><div style="position:absolute;left:1606px;top:1005px;width:24px;height:23px;background:#3c3c3c;"></div><div style="position:absolute;left:1634px;top:1005px;width:105px;height:23px;background:#3c3c3c;"></div><div style="position:absolute;left:1742px;top:1005px;width:39px;height:23px;background:#3c3c3c;"></div><div style="position:absolute;left:1783px;top:1005px;width:24px;height:23px;background:#3c3c3c;"></div><div style="position:absolute;left:1810px;top:1005px;width:24px;height:23px;background:#3c3c3c;"></div><div style="position:absolute;left:1837px;top:1005px;width:29px;height:23px;background:#3c3c3c;"></div><div style="position:absolute;left:1870px;top:1005px;width:50px;height:23px;background:#3c3c3c;"></div><span style="position:absolute;left:1322px;top:1008.5px;line-height:15px;font-size:12px;font-family:'Liberation Sans',sans-serif;color:#e6e6e6;white-space:nowrap;transform-origin:0 0;transform:scaleX(0.979);">MODEL</span><div style="position:absolute;left:1370px;top:1006px;width:22px;height:22px;background:#8a8a8a;"></div><svg style="position:absolute;left:1374px;top:1009px;overflow:visible;" width="15" height="15" viewBox="0 0 15 15"><path d="M3.5 0 V15 M7.5 0 V15 M11.5 0 V15 M0 3.5 H15 M0 7.5 H15 M0 11.5 H15" stroke="#e4e4e4" stroke-width="1.1"/></svg><svg style="position:absolute;left:1399px;top:1010px;overflow:visible;" width="13" height="13" viewBox="0 0 13 13"><rect x="0" y="0" width="2.2" height="2.2" fill="#e4e4e4"/><rect x="5" y="0" width="2.2" height="2.2" fill="#e4e4e4"/><rect x="10" y="0" width="2.2" height="2.2" fill="#e4e4e4"/><rect x="0" y="5" width="2.2" height="2.2" fill="#e4e4e4"/><rect x="5" y="5" width="2.2" height="2.2" fill="#e4e4e4"/><rect x="10" y="5" width="2.2" height="2.2" fill="#e4e4e4"/><rect x="0" y="10" width="2.2" height="2.2" fill="#e4e4e4"/><rect x="5" y="10" width="2.2" height="2.2" fill="#e4e4e4"/><rect x="10" y="10" width="2.2" height="2.2" fill="#e4e4e4"/></svg><svg style="position:absolute;left:1421px;top:1015px;overflow:visible;" width="7" height="4" viewBox="0 0 7 4"><path d="M0 0 H7 L3.5 4 Z" fill="#e0e0e0"/></svg><svg style="position:absolute;left:1488px;top:1015px;overflow:visible;" width="7" height="4" viewBox="0 0 7 4"><path d="M0 0 H7 L3.5 4 Z" fill="#e0e0e0"/></svg><svg style="position:absolute;left:1528px;top:1015px;overflow:visible;" width="7" height="4" viewBox="0 0 7 4"><path d="M0 0 H7 L3.5 4 Z" fill="#e0e0e0"/></svg><svg style="position:absolute;left:1593px;top:1015px;overflow:visible;" width="7" height="4" viewBox="0 0 7 4"><path d="M0 0 H7 L3.5 4 Z" fill="#e0e0e0"/></svg><svg style="position:absolute;left:1727px;top:1015px;overflow:visible;" width="7" height="4" viewBox="0 0 7 4"><path d="M0 0 H7 L3.5 4 Z" fill="#e0e0e0"/></svg><svg style="position:absolute;left:1769px;top:1015px;overflow:visible;" width="7" height="4" viewBox="0 0 7 4"><path d="M0 0 H7 L3.5 4 Z" fill="#e0e0e0"/></svg><svg style="position:absolute;left:1440px;top:1009px;overflow:visible;" width="17" height="16" viewBox="0 0 17 16"><path d="M0.5 0 V15.5 H17 M0.5 10.5 H5.5 V15.5" fill="none" stroke="#e4e4e4" stroke-width="1.1"/></svg><svg style="position:absolute;left:1463px;top:1009px;overflow:visible;" width="17" height="16" viewBox="0 0 17 16"><circle cx="7" cy="9" r="6.5" fill="none" stroke="#e4e4e4" stroke-width="1.1"/><path d="M7 9 L14 2 M7 9 H17" stroke="#e4e4e4" stroke-width="1.1"/></svg><svg style="position:absolute;left:1505px;top:1009px;overflow:visible;" width="13" height="16" viewBox="0 0 13 16"><path d="M0 0 L13 15 M6.5 0 V16" stroke="#e4e4e4" stroke-width="1.1"/><circle cx="6.5" cy="7.5" r="1.5" fill="none" stroke="#e4e4e4"/></svg><svg style="position:absolute;left:1545px;top:1010px;overflow:visible;" width="17" height="14" viewBox="0 0 17 14"><path d="M17 13.5 H0.5 L13 1" fill="none" stroke="#e4e4e4" stroke-width="1.1"/><rect x="5.5" y="6.5" width="3" height="3" fill="#e4e4e4"/></svg><div style="position:absolute;left:1566px;top:1006px;width:22px;height:22px;background:#8a8a8a;"></div><svg style="position:absolute;left:1569px;top:1009px;overflow:visible;" width="16" height="16" viewBox="0 0 16 16"><rect x="3.5" y="3.5" width="12" height="12" fill="none" stroke="#e4e4e4" stroke-width="1.3"/><rect x="0.5" y="0.5" width="4" height="4" fill="#8a8a8a" stroke="#e4e4e4" stroke-width="1"/></svg><svg style="position:absolute;left:1610px;top:1009px;overflow:visible;" width="17" height="15" viewBox="0 0 17 15"><rect x="0" y="0" width="17" height="1.5" fill="#e4e4e4"/><rect x="0" y="4" width="13" height="2" fill="#e4e4e4"/><rect x="0" y="8.5" width="17" height="2.5" fill="#e4e4e4"/><rect x="0" y="12.5" width="11" height="2.5" fill="#e4e4e4"/></svg><div style="position:absolute;left:1634px;top:1006px;width:22px;height:22px;background:#8a8a8a;"></div><div style="position:absolute;left:1658px;top:1006px;width:22px;height:22px;background:#8a8a8a;"></div><svg style="position:absolute;left:1637px;top:1009px;overflow:visible;" width="17" height="16" viewBox="0 0 17 16"><path d="M8 0.5 L10.5 8 L16 15 L10 13 L8 16 L6 13 L0 15 L5.5 8 Z" fill="#e4e4e4"/><path d="M8 6 L9 10 L8 12 L7 10 Z" fill="#8a8a8a"/><circle cx="13" cy="4" r="2.5" fill="none" stroke="#e4e4e4"/></svg><svg style="position:absolute;left:1661px;top:1009px;overflow:visible;" width="17" height="16" viewBox="0 0 17 16"><path d="M8 0.5 L10.5 8 L16 15 L10 13 L8 16 L6 13 L0 15 L5.5 8 Z" fill="#e4e4e4"/><path d="M8 6 L9 10 L8 12 L7 10 Z" fill="#8a8a8a"/><path d="M14 0 L11 4 H14 L12 8" fill="none" stroke="#e4e4e4"/></svg><svg style="position:absolute;left:1685px;top:1009px;overflow:visible;" width="16" height="16" viewBox="0 0 16 16"><path d="M8 0.5 L10.5 8 L16 15 L10 13 L8 16 L6 13 L0 15 L5.5 8 Z" fill="#e4e4e4"/><path d="M8 6 L9 10 L8 12 L7 10 Z" fill="#8a8a8a"/></svg><span style="position:absolute;left:1710px;top:1008.5px;line-height:15px;font-size:12px;font-family:'Liberation Sans',sans-serif;color:#e4e4e4;white-space:nowrap;transform-origin:0 0;transform:scaleX(0.767);">1:1</span><svg style="position:absolute;left:1745px;top:1009px;overflow:visible;" width="16" height="16" viewBox="0 0 16 16"><g fill="#d8d8d8"><circle cx="8" cy="8" r="5.5"/><rect x="6.5" y="0" width="3" height="16" transform="rotate(0 8 8)"/><rect x="6.5" y="0" width="3" height="16" transform="rotate(45 8 8)"/><rect x="6.5" y="0" width="3" height="16" transform="rotate(90 8 8)"/><rect x="6.5" y="0" width="3" height="16" transform="rotate(135 8 8)"/></g><circle cx="8" cy="8" r="2.5" fill="#3c3c3c"/></svg><svg style="position:absolute;left:1787px;top:1009px;overflow:visible;" width="16" height="16" viewBox="0 0 16 16"><path d="M8 0 V16 M0 8 H16" stroke="#e4e4e4" stroke-width="1.6"/></svg><svg style="position:absolute;left:1813px;top:1009px;overflow:visible;" width="17" height="16" viewBox="0 0 17 16"><rect x="0.5" y="0.5" width="6" height="6" fill="none" stroke="#e4e4e4"/><circle cx="13" cy="5" r="3.2" fill="none" stroke="#e4e4e4"/><path d="M6 15.5 L9 10 L12 15.5 Z" fill="none" stroke="#e4e4e4"/></svg><svg style="position:absolute;left:1843px;top:1009px;overflow:visible;" width="17" height="16" viewBox="0 0 17 16"><rect x="0" y="1" width="17" height="11" fill="#bdbdbd"/><path d="M1 8 C4 2 6 2 8 8 C10 13 12 11 16 5" fill="none" stroke="#5a5a5a"/><path d="M11 16 L14 9 L17 16 Z" fill="#e4e4e4"/></svg><svg style="position:absolute;left:1874px;top:1010px;overflow:visible;" width="17" height="14" viewBox="0 0 17 14"><rect x="0.5" y="0.5" width="16" height="13" fill="none" stroke="#e4e4e4"/><path d="M3 10 L7 6 M3 10 V7.5 M3 10 H5.5 M14 3.5 L10 7.5 M14 3.5 V6 M14 3.5 H11.5" stroke="#e4e4e4" stroke-width="1.1" fill="none"/></svg><svg style="position:absolute;left:1898px;top:1009px;overflow:visible;" width="17" height="16" viewBox="0 0 17 16"><path d="M0 2 H17 M0 8 H17 M0 14 H17" stroke="#e4e4e4" stroke-width="2"/></svg><div style="position:absolute;left:446px;top:299px;width:642px;height:505px;background:#f0f0f0;border-radius:8px;box-shadow:0 0 0 1px rgba(0,0,0,0.25),0 3px 16px rgba(0,0,0,0.5);"></div><div style="position:absolute;left:446px;top:299px;width:642px;height:30px;background:#f3f3f3;border-radius:8px 8px 0 0;"></div><svg style="position:absolute;left:455px;top:305px;overflow:visible;" width="15" height="17" viewBox="0 0 15 17"><path d="M1 0 H12 L14 2 V17 H1 Z" fill="#9e1b3e"/><rect x="0" y="0" width="14" height="12" rx="1.5" fill="#e1245a"/><path d="M4 10 L6.5 2.5 H8 L10.5 10 H9 L8.5 8 H6 L5.5 10 Z M6.3 6.8 H8.2 L7.25 4 Z" fill="#fff"/><rect x="4" y="13" width="6" height="2" fill="#d08a9a"/></svg><span style="position:absolute;left:476px;top:306.0px;line-height:16px;font-size:12.5px;font-family:'Liberation Sans',sans-serif;color:#1a1a1a;white-space:nowrap;transform-origin:0 0;transform:scaleX(0.910);">Select Reference File</span><svg style="position:absolute;left:1067px;top:308px;overflow:visible;" width="11" height="11" viewBox="0 0 11 11"><path d="M0.5 0.5 L10.5 10.5 M10.5 0.5 L0.5 10.5" stroke="#222" stroke-width="1.2"/></svg><span style="position:absolute;left:526px;top:338.5px;line-height:15px;font-size:12px;font-family:'Liberation Sans',sans-serif;color:#1a1a1a;white-space:nowrap;transform-origin:0 0;transform:scaleX(0.899);">Look in:</span><div style="position:absolute;left:575px;top:337px;width:244px;height:21px;background:#ffffff;border:1px solid #d5d5d5;border-radius:3px;box-sizing:border-box;"></div><svg style="position:absolute;left:581px;top:340px;overflow:visible;" width="16" height="14" viewBox="0 0 16 14"><path d="M0 1.5 A1.5 1.5 0 0 1 1.5 0 H6 L8 2 H14.5 A1.5 1.5 0 0 1 16 3.5 V12.5 A1.5 1.5 0 0 1 14.5 14 H1.5 A1.5 1.5 0 0 1 0 12.5 Z" fill="#e8a818"/><path d="M0 4.5 H16 V12.5 A1.5 1.5 0 0 1 14.5 14 H1.5 A1.5 1.5 0 0 1 0 12.5 Z" fill="#fcd36a"/></svg><span style="position:absolute;left:598px;top:340.0px;line-height:15px;font-size:12px;font-family:'Liberation Sans',sans-serif;color:#1a1a1a;white-space:nowrap;transform-origin:0 0;transform:scaleX(0.821);">Imagens</span><svg style="position:absolute;left:805px;top:345px;overflow:visible;" width="10" height="6" viewBox="0 0 10 6"><path d="M0.5 0.5 L5 5 L9.5 0.5" fill="none" stroke="#555" stroke-width="1"/></svg><svg style="position:absolute;left:831px;top:339px;overflow:visible;" width="16" height="14" viewBox="0 0 16 14"><path d="M0 7 L7 0 V4 H16 V10 H7 V14 Z" fill="#1e88e5"/></svg><svg style="position:absolute;left:856px;top:338px;overflow:visible;" width="17" height="17" viewBox="0 0 17 17"><path d="M0 1.5 A1.5 1.5 0 0 1 1.5 0 H6 L8 2 H14 V12 H0 Z" fill="#f5a80f"/><path d="M0 4 H14 V12 H0 Z" fill="#fbb623"/><path d="M11 8 L15 12 H12.5 V16 H9.5 V12 H7 Z" fill="#1e88e5"/><rect x="6" y="15" width="7" height="2" fill="#1e88e5"/></svg><svg style="position:absolute;left:883px;top:339px;overflow:visible;" width="14" height="14" viewBox="0 0 14 14"><path d="M1 1 L13 13 M13 1 L1 13" stroke="#e53935" stroke-width="2.6"/></svg><svg style="position:absolute;left:907px;top:338px;overflow:visible;" width="17" height="17" viewBox="0 0 17 17"><path d="M0 1.5 A1.5 1.5 0 0 1 1.5 0 H6 L8 2 H14 V12 H0 Z" fill="#f5a80f"/><path d="M0 4 H14 V12 H0 Z" fill="#fbb623"/><path d="M13 10 V17 M9.5 13.5 H16.5" stroke="#1fa339" stroke-width="2.2"/></svg><span style="position:absolute;left:966px;top:338.5px;line-height:15px;font-size:12px;font-family:'Liberation Sans',sans-serif;color:#1a1a1a;white-space:nowrap;transform-origin:0 0;transform:scaleX(0.874);">Views</span><div style="position:absolute;left:966px;top:353px;width:7px;height:1px;background:#1a1a1a;"></div><svg style="position:absolute;left:1007px;top:344px;overflow:visible;" width="8" height="4" viewBox="0 0 8 4"><path d="M0 0 H8 L4.0 4 Z" fill="#111"/></svg><span style="position:absolute;left:1026px;top:338.5px;line-height:15px;font-size:12px;font-family:'Liberation Sans',sans-serif;color:#1a1a1a;white-space:nowrap;transform-origin:0 0;transform:scaleX(0.921);">Tools</span><svg style="position:absolute;left:1066px;top:344px;overflow:visible;" width="8" height="4" viewBox="0 0 8 4"><path d="M0 0 H8 L4.0 4 Z" fill="#111"/></svg><div style="position:absolute;left:451px;top:365px;width:114px;height:427px;background:#bfcddb;border:1px solid #80858e;box-shadow:inset 0 0 0 1px #ffffff;box-sizing:border-box;"></div><svg style="position:absolute;left:491px;top:372px;overflow:visible;" width="33" height="32" viewBox="0 0 33 32"><circle cx="10" cy="9" r="8.5" fill="#f4f4f4" stroke="#bdbdbd" stroke-width="0.8"/><path d="M8.5 4 V10 H13" fill="none" stroke="#444" stroke-width="1.1"/><path d="M14 4 H26 L31 9 V26 H14 Z" fill="#f8f8f8" stroke="#777" stroke-width="0.8"/><path d="M26 4 V9 H31" fill="none" stroke="#777" stroke-width="0.8"/><path d="M19 12 H28 M19 15 H28 M19 18 H28 M19 21 H28" stroke="#2a9fd8" stroke-width="1"/><path d="M5 15 L13 11 L21 15 V30 L13 24 L5 30 Z" fill="#1565c0"/><path d="M5 30 L13 24 L21 30 Z" fill="#e3f2fd"/><circle cx="13" cy="17" r="1.6" fill="#fff"/></svg><span style="position:absolute;left:491px;top:410.5px;line-height:15px;font-size:12px;font-family:'Liberation Sans',sans-serif;color:#1a1a1a;white-space:nowrap;transform-origin:0 0;transform:scaleX(0.852);">History</span><svg style="position:absolute;left:495px;top:432px;overflow:visible;" width="25" height="32" viewBox="0 0 25 32"><defs><linearGradient id="gd" x1="0" y1="0" x2="0" y2="1"><stop offset="0" stop-color="#a8bccf"/><stop offset="1" stop-color="#7590ab"/></linearGradient></defs><rect x="0" y="0" width="25" height="32" rx="3" fill="url(#gd)"/><path d="M4 11 H13 M4 15 H13 M4 19 H21 M4 23 H21" stroke="#fff" stroke-width="1.8"/><rect x="14" y="8" width="7" height="7" fill="#fff"/></svg><span style="position:absolute;left:480px;top:470.5px;line-height:15px;font-size:12px;font-family:'Liberation Sans',sans-serif;color:#1a1a1a;white-space:nowrap;transform-origin:0 0;transform:scaleX(0.886);">Documents</span><svg style="position:absolute;left:491px;top:495px;overflow:visible;" width="33" height="25" viewBox="0 0 33 25"><defs><linearGradient id="gk" x1="0" y1="0" x2="1" y2="1"><stop offset="0" stop-color="#3dd6e0"/><stop offset="1" stop-color="#1b8bc4"/></linearGradient></defs><rect x="0" y="0" width="33" height="23" rx="2" fill="url(#gk)"/><rect x="0" y="20" width="33" height="3" fill="#17607f"/><rect x="25" y="22" width="2" height="2" fill="#17607f"/><rect x="29" y="22" width="2" height="2" fill="#17607f"/></svg><span style="position:absolute;left:487px;top:529.5px;line-height:15px;font-size:12px;font-family:'Liberation Sans',sans-serif;color:#1a1a1a;white-space:nowrap;transform-origin:0 0;transform:scaleX(0.904);">Desktop</span><svg style="position:absolute;left:491px;top:555px;overflow:visible;" width="33" height="22" viewBox="0 0 33 22"><path d="M8 22 C2 22 0 18 1 14 C2 9 6 8 9 9 C11 3 17 1 22 4 C25 6 26 8 26 10 C30 10 33 13 33 16 C33 20 30 22 27 22 Z" fill="#28a8ea"/><path d="M8 22 C2 22 0 18 1 14 C2 9 6 8 9 9 C11 3 17 1 22 4 C18 5 14 9 13 13 C10 13 6 15 6 18 C6 20 7 21 8 22 Z" fill="#0f62c9"/><path d="M9 9 C11 3 17 1 22 4 C17 4 13 7 12 11 Z" fill="#1a7fe0"/></svg><span style="position:absolute;left:480px;top:589.5px;line-height:15px;font-size:12px;font-family:'Liberation Sans',sans-serif;color:#1a1a1a;white-space:nowrap;transform-origin:0 0;transform:scaleX(0.982);">OneDrive</span><div style="position:absolute;left:575px;top:365px;width:242px;height:329px;background:#ffffff;"></div><div style="position:absolute;left:734px;top:365px;width:1px;height:329px;background:#e8f0f8;"></div><svg style="position:absolute;left:651px;top:365px;overflow:visible;" width="9" height="5" viewBox="0 0 9 5"><path d="M0.5 4.5 L4.5 0.5 L8.5 4.5" fill="none" stroke="#666" stroke-width="1"/></svg><span style="position:absolute;left:581px;top:370.0px;line-height:15px;font-size:12px;font-family:'Liberation Sans',sans-serif;color:#1a1a1a;white-space:nowrap;transform-origin:0 0;transform:scaleX(1.056);">Nome</span><span style="position:absolute;left:741px;top:370.0px;line-height:15px;font-size:12px;font-family:'Liberation Sans',sans-serif;color:#1a1a1a;white-space:nowrap;transform-origin:0 0;transform:scaleX(1.028);clip-path:inset(0 -20px 0 0);">Data de modif</span><svg style="position:absolute;left:585px;top:390px;overflow:visible;" width="13" height="17" viewBox="0 0 13 17"><path d="M0.5 0.5 H8.5 L12.5 4.5 V16.5 H0.5 Z" fill="#fff" stroke="#7a7a7a" stroke-width="1"/><path d="M8.5 0.5 V4.5 H12.5" fill="none" stroke="#7a7a7a" stroke-width="1"/></svg><span style="position:absolute;left:601px;top:392.0px;line-height:15px;font-size:12px;font-family:'Liberation Sans',sans-serif;color:#1a1a1a;white-space:nowrap;transform-origin:0 0;transform:scaleX(0.951);">01_1_Interface_Toolbar...</span><span style="position:absolute;left:741px;top:392.0px;line-height:15px;font-size:12px;font-family:'Liberation Sans',sans-serif;color:#1a1a1a;white-space:nowrap;transform-origin:0 0;transform:scaleX(0.947);">27/10/2025 18:</span><svg style="position:absolute;left:585px;top:409px;overflow:visible;" width="13" height="17" viewBox="0 0 13 17"><path d="M0.5 0.5 H8.5 L12.5 4.5 V16.5 H0.5 Z" fill="#fff" stroke="#7a7a7a" stroke-width="1"/><path d="M8.5 0.5 V4.5 H12.5" fill="none" stroke="#7a7a7a" stroke-width="1"/></svg><span style="position:absolute;left:601px;top:411.0px;line-height:15px;font-size:12px;font-family:'Liberation Sans',sans-serif;color:#1a1a1a;white-space:nowrap;transform-origin:0 0;transform:scaleX(0.943);">01_2_Interface_Properti...</span><span style="position:absolute;left:741px;top:411.0px;line-height:15px;font-size:12px;font-family:'Liberation Sans',sans-serif;color:#1a1a1a;white-space:nowrap;transform-origin:0 0;transform:scaleX(0.947);">27/10/2025 18:</span><svg style="position:absolute;left:585px;top:428px;overflow:visible;" width="13" height="17" viewBox="0 0 13 17"><path d="M0.5 0.5 H8.5 L12.5 4.5 V16.5 H0.5 Z" fill="#fff" stroke="#7a7a7a" stroke-width="1"/><path d="M8.5 0.5 V4.5 H12.5" fill="none" stroke="#7a7a7a" stroke-width="1"/></svg><span style="position:absolute;left:601px;top:430.0px;line-height:15px;font-size:12px;font-family:'Liberation Sans',sans-serif;color:#1a1a1a;white-space:nowrap;transform-origin:0 0;transform:scaleX(0.917);">01_3_Interface_Layers....</span><span style="position:absolute;left:741px;top:430.0px;line-height:15px;font-size:12px;font-family:'Liberation Sans',sans-serif;color:#1a1a1a;white-space:nowrap;transform-origin:0 0;transform:scaleX(0.947);">27/10/2025 18:</span><svg style="position:absolute;left:585px;top:447px;overflow:visible;" width="13" height="17" viewBox="0 0 13 17"><path d="M0.5 0.5 H8.5 L12.5 4.5 V16.5 H0.5 Z" fill="#fff" stroke="#7a7a7a" stroke-width="1"/><path d="M8.5 0.5 V4.5 H12.5" fill="none" stroke="#7a7a7a" stroke-width="1"/></svg><span style="position:absolute;left:601px;top:449.0px;line-height:15px;font-size:12px;font-family:'Liberation Sans',sans-serif;color:#1a1a1a;white-space:nowrap;transform-origin:0 0;transform:scaleX(0.948);">01_4_Interface_Model....</span><span style="position:absolute;left:741px;top:449.0px;line-height:15px;font-size:12px;font-family:'Liberation Sans',sans-serif;color:#1a1a1a;white-space:nowrap;transform-origin:0 0;transform:scaleX(0.947);">27/10/2025 18:</span><svg style="position:absolute;left:585px;top:466px;overflow:visible;" width="13" height="17" viewBox="0 0 13 17"><path d="M0.5 0.5 H8.5 L12.5 4.5 V16.5 H0.5 Z" fill="#fff" stroke="#7a7a7a" stroke-width="1"/><path d="M8.5 0.5 V4.5 H12.5" fill="none" stroke="#7a7a7a" stroke-width="1"/></svg><span style="position:absolute;left:601px;top:468.0px;line-height:15px;font-size:12px;font-family:'Liberation Sans',sans-serif;color:#1a1a1a;white-space:nowrap;transform-origin:0 0;transform:scaleX(0.973);">02_1_ImageAttach.png</span><span style="position:absolute;left:741px;top:468.0px;line-height:15px;font-size:12px;font-family:'Liberation Sans',sans-serif;color:#1a1a1a;white-space:nowrap;transform-origin:0 0;transform:scaleX(0.947);">27/10/2025 18:</span><svg style="position:absolute;left:585px;top:485px;overflow:visible;" width="13" height="17" viewBox="0 0 13 17"><path d="M0.5 0.5 H8.5 L12.5 4.5 V16.5 H0.5 Z" fill="#fff" stroke="#7a7a7a" stroke-width="1"/><path d="M8.5 0.5 V4.5 H12.5" fill="none" stroke="#7a7a7a" stroke-width="1"/></svg><span style="position:absolute;left:601px;top:487.0px;line-height:15px;font-size:12px;font-family:'Liberation Sans',sans-serif;color:#1a1a1a;white-space:nowrap;transform-origin:0 0;transform:scaleX(0.996);">Interface.png</span><span style="position:absolute;left:741px;top:487.0px;line-height:15px;font-size:12px;font-family:'Liberation Sans',sans-serif;color:#1a1a1a;white-space:nowrap;transform-origin:0 0;transform:scaleX(0.947);">27/10/2025 17:</span><div style="position:absolute;left:579px;top:503px;width:238px;height:19px;background:#cce8ff;border:1px dotted #0a4f9e;box-sizing:border-box;"></div><svg style="position:absolute;left:585px;top:504px;overflow:visible;" width="13" height="17" viewBox="0 0 13 17"><path d="M0.5 0.5 H8.5 L12.5 4.5 V16.5 H0.5 Z" fill="#fff" stroke="#7a7a7a" stroke-width="1"/><path d="M8.5 0.5 V4.5 H12.5" fill="none" stroke="#7a7a7a" stroke-width="1"/></svg><span style="position:absolute;left:601px;top:506.0px;line-height:15px;font-size:12px;font-family:'Liberation Sans',sans-serif;color:#1a1a1a;white-space:nowrap;transform-origin:0 0;transform:scaleX(0.947);">Planta_Base.jpg</span><span style="position:absolute;left:741px;top:506.0px;line-height:15px;font-size:12px;font-family:'Liberation Sans',sans-serif;color:#1a1a1a;white-space:nowrap;transform-origin:0 0;transform:scaleX(0.947);">17/10/2025 09:</span><div style="position:absolute;left:817px;top:365px;width:10px;height:340px;background:#f0f0f0;"></div><div style="position:absolute;left:591px;top:701px;width:101px;height:2px;background:#858585;"></div><div style="position:absolute;left:827px;top:374px;width:254px;height:189px;background:transparent;border:1px solid #dcdcdc;box-sizing:border-box;"></div><div style="position:absolute;left:834px;top:368px;width:42px;height:12px;background:#f0f0f0;"></div><span style="position:absolute;left:836px;top:367.5px;line-height:15px;font-size:12px;font-family:'Liberation Sans',sans-serif;color:#1a1a1a;white-space:nowrap;transform-origin:0 0;transform:scaleX(0.886);">Preview</span><div style="position:absolute;left:828px;top:382px;width:252px;height:176px;background:#ffffff;"></div><div style="position:absolute;left:1079px;top:382px;width:1px;height:176px;background:#222222;"></div><svg style="position:absolute;left:860px;top:405px;overflow:visible;" width="190" height="145" viewBox="0 0 190 145"><path d="M8.399999999999977 25.30000000000001 L15.5 14 L177 10.5 L179.20000000000005 130.70000000000005 L53.39999999999998 129.29999999999995 Z" fill="none" stroke="#d8d8d8" stroke-width="0.6"/><path d="M10 23 L16 15 L22 19 L20 27 Z" fill="none" stroke="#555" stroke-width="0.6" stroke-dasharray="1 1"/><rect x="74.5" y="46.39999999999998" width="6" height="49" fill="#d6d6d6"/><rect x="74.5" y="91" width="28" height="5" fill="#dcdcdc"/><path d="M81 53 H104 V96 M81 53 V91 H93" fill="none" stroke="#707070" stroke-width="0.8"/><path d="M102 91 H121 V112 H135 V58 H130" fill="none" stroke="#404040" stroke-width="0.8"/><path d="M121 58 V55 H125" fill="none" stroke="#404040" stroke-width="0.8"/><rect x="50.60000000000002" y="30.19999999999999" width="55" height="15" fill="none" stroke="#a0a0a0" stroke-width="0.6"/><rect x="71" y="104.69999999999999" width="34" height="12.7" fill="none" stroke="#a8a8a8" stroke-width="0.6"/><rect x="139" y="61" width="15" height="25" fill="none" stroke="#b0b0b0" stroke-width="0.6"/><path d="M33 45 H65 M35 57 H75 M45 100 H105 M60 122 H110 M100 40 V115 M115 15 V65 M85 35 H140 M130 65 H175" stroke="#c8c8c8" stroke-width="0.5"/><path d="M85 60 H98 M85 70 H98 M108 65 H120 M108 75 H120 M85 80 H95" stroke="#909090" stroke-width="0.6"/><path d="M98.5 61.9 v2.4 M109.9 74.6 h5.6 M83.0 78.6 h2.6 M103.9 101.8 h3.6 M114.9 108.9 v4.4 M133.7 55.7 v3.7 M88.8 59.9 h7.7 M90.8 87.3 v4.2 M110.6 56.7 h3.4 M117.7 78.2 h6.1 M105.5 70.7 v6.2 M94.2 86.9 v7.3 M120.4 70.0 v2.7 M103.6 97.7 h5.4 M83.1 92.4 v5.4 M128.3 71.5 v5.6 M112.3 79.9 v7.7 M106.6 92.2 h6.9 M115.9 111.6 v3.7 M101.8 92.5 h5.2 M90.1 59.9 h7.4 M88.0 67.6 h8.1 M85.4 79.5 v7.3 M125.2 104.0 h4.9 M100.4 105.2 v2.9 M90.5 66.7 h5.4 M112.8 68.5 h4.9 M100.9 86.4 v6.1 M108.8 89.4 v2.3 M129.6 99.0 v6.8 M102.2 76.5 h6.4 M84.4 57.0 h3.1 M99.4 56.1 h3.1 M86.5 74.5 h8.1 M114.2 61.8 h4.4 M100.7 60.2 v8.0 M106.2 81.5 h2.7 M99.5 68.6 v3.0 M82.2 109.1 v2.9 M110.3 54.6 v7.9 M127.6 94.1 h4.6 M90.0 98.5 v6.7 M98.8 66.2 v7.9 M127.0 100.6 v6.4 M93.2 83.5 h2.2 M82.5 69.5 h6.8 M132.7 79.4 v7.9 M132.6 74.5 h3.6 M91.6 65.1 v7.4 M126.4 81.3 v6.8 M85.6 92.0 v6.7 M121.5 81.2 h7.5 M99.0 100.2 v4.4 M102.7 108.9 v3.0 M87.9 61.9 v6.8 M88.9 101.8 v5.9 M99.9 85.4 h2.1 M133.4 91.3 v7.6 M104.4 104.4 v3.3 M94.6 70.3 h6.1" stroke="#8a8a8a" stroke-width="0.5" fill="none"/><path d="M78.7 66.9 h13.9 M91.0 70.8 v11.1 M99.7 116.8 v7.8 M113.1 26.9 h5.2 M45.5 104.9 h8.7 M139.3 80.6 h9.2 M117.2 103.4 h9.7 M77.3 52.7 v7.6 M118.0 101.0 v7.0 M124.6 75.6 v9.2 M103.8 78.3 h14.3 M135.9 112.7 v5.3 M117.7 119.3 v4.2 M60.8 69.2 h5.9 M54.5 91.9 v11.1 M65.1 96.6 v4.3 M159.8 121.8 h14.4 M96.8 73.7 v10.5 M66.0 68.2 v6.1 M70.4 56.9 v3.2 M117.0 69.0 h7.0 M126.1 76.2 h14.8 M147.5 122.2 h6.2 M50.1 102.9 h4.6 M99.9 116.1 v5.3 M64.4 116.9 v9.3 M56.6 30.8 v6.8 M54.4 118.8 v10.2 M55.9 110.6 h13.4 M104.0 58.9 v11.3 M79.8 37.9 v5.1 M59.2 41.1 h5.4 M85.6 55.5 v5.6 M110.0 42.8 h3.2 M77.6 26.5 v8.0 M69.6 72.5 v4.0 M151.5 68.2 h13.0 M96.1 75.7 v11.8 M89.6 108.2 v8.7 M97.6 59.8 h4.6" stroke="#cfcfcf" stroke-width="0.5" fill="none"/><path d="M104 53 V90 H120 V112.39999999999998 H135.60000000000002 V58.30000000000001 H131" fill="none" stroke="#3a3a3a" stroke-width="0.9"/><circle cx="165.8" cy="70.3" r="10" fill="#e2ead6" stroke="#b8c8a4" stroke-width="0.7" stroke-dasharray="1 0.8"/><circle cx="167.3" cy="100.5" r="9" fill="#e2ead6" stroke="#b8c8a4" stroke-width="0.7" stroke-dasharray="1 0.8"/><circle cx="171.5" cy="120.2" r="8" fill="#e2ead6" stroke="#b8c8a4" stroke-width="0.7" stroke-dasharray="1 0.8"/><circle cx="29.5" cy="18.3" r="5" fill="#bccfa8" stroke="#93a882" stroke-width="0.6" stroke-dasharray="1.2 0.6"/><circle cx="40.0" cy="19.7" r="5.5" fill="#bccfa8" stroke="#93a882" stroke-width="0.6" stroke-dasharray="1.2 0.6"/><circle cx="52.7" cy="19.0" r="6" fill="#bccfa8" stroke="#93a882" stroke-width="0.6" stroke-dasharray="1.2 0.6"/><circle cx="72.4" cy="18.3" r="6" fill="#bccfa8" stroke="#93a882" stroke-width="0.6" stroke-dasharray="1.2 0.6"/><circle cx="87.8" cy="16.9" r="4" fill="#bccfa8" stroke="#93a882" stroke-width="0.6" stroke-dasharray="1.2 0.6"/><circle cx="105.7" cy="17.6" r="4" fill="#bccfa8" stroke="#93a882" stroke-width="0.6" stroke-dasharray="1.2 0.6"/><circle cx="121.6" cy="16.6" r="4" fill="#bccfa8" stroke="#93a882" stroke-width="0.6" stroke-dasharray="1.2 0.6"/><circle cx="131.4" cy="16.2" r="4" fill="#bccfa8" stroke="#93a882" stroke-width="0.6" stroke-dasharray="1.2 0.6"/><circle cx="128.0" cy="22.5" r="3.5" fill="#bccfa8" stroke="#93a882" stroke-width="0.6" stroke-dasharray="1.2 0.6"/><circle cx="132.1" cy="31.6" r="4" fill="#bccfa8" stroke="#93a882" stroke-width="0.6" stroke-dasharray="1.2 0.6"/><circle cx="109.6" cy="41.5" r="4" fill="#bccfa8" stroke="#93a882" stroke-width="0.6" stroke-dasharray="1.2 0.6"/><circle cx="130.7" cy="43.6" r="6" fill="#bccfa8" stroke="#93a882" stroke-width="0.6" stroke-dasharray="1.2 0.6"/><circle cx="172.9" cy="16.9" r="6" fill="#bccfa8" stroke="#93a882" stroke-width="0.6" stroke-dasharray="1.2 0.6"/><circle cx="27.4" cy="27.4" r="5" fill="#bccfa8" stroke="#93a882" stroke-width="0.6" stroke-dasharray="1.2 0.6"/><circle cx="28.1" cy="37.2" r="5" fill="#bccfa8" stroke="#93a882" stroke-width="0.6" stroke-dasharray="1.2 0.6"/><circle cx="21.1" cy="45.7" r="5.5" fill="#bccfa8" stroke="#93a882" stroke-width="0.6" stroke-dasharray="1.2 0.6"/><circle cx="26.7" cy="56.2" r="6" fill="#bccfa8" stroke="#93a882" stroke-width="0.6" stroke-dasharray="1.2 0.6"/><circle cx="30.9" cy="67.5" r="5.5" fill="#bccfa8" stroke="#93a882" stroke-width="0.6" stroke-dasharray="1.2 0.6"/><circle cx="35.8" cy="78.0" r="5.5" fill="#bccfa8" stroke="#93a882" stroke-width="0.6" stroke-dasharray="1.2 0.6"/><circle cx="42.2" cy="89.2" r="5.5" fill="#bccfa8" stroke="#93a882" stroke-width="0.6" stroke-dasharray="1.2 0.6"/><circle cx="47.1" cy="108.2" r="5.5" fill="#bccfa8" stroke="#93a882" stroke-width="0.6" stroke-dasharray="1.2 0.6"/><circle cx="54.1" cy="123.0" r="5.5" fill="#bccfa8" stroke="#93a882" stroke-width="0.6" stroke-dasharray="1.2 0.6"/><circle cx="114.5" cy="127.2" r="5.5" fill="#bccfa8" stroke="#93a882" stroke-width="0.6" stroke-dasharray="1.2 0.6"/><circle cx="130.7" cy="127.9" r="5.5" fill="#bccfa8" stroke="#93a882" stroke-width="0.6" stroke-dasharray="1.2 0.6"/><circle cx="144.8" cy="128.6" r="5.5" fill="#bccfa8" stroke="#93a882" stroke-width="0.6" stroke-dasharray="1.2 0.6"/><circle cx="158.8" cy="129.3" r="5.5" fill="#bccfa8" stroke="#93a882" stroke-width="0.6" stroke-dasharray="1.2 0.6"/><circle cx="64.0" cy="16.9" r="3" fill="#6f8468" stroke="#56684f" stroke-width="0.5" stroke-dasharray="1 0.6"/><circle cx="66.0" cy="24.6" r="2.5" fill="#6f8468" stroke="#56684f" stroke-width="0.5" stroke-dasharray="1 0.6"/><circle cx="95.6" cy="22.5" r="2.5" fill="#6f8468" stroke="#56684f" stroke-width="0.5" stroke-dasharray="1 0.6"/><circle cx="95.6" cy="27.4" r="2.5" fill="#6f8468" stroke="#56684f" stroke-width="0.5" stroke-dasharray="1 0.6"/><circle cx="139.1" cy="26.7" r="3" fill="#6f8468" stroke="#56684f" stroke-width="0.5" stroke-dasharray="1 0.6"/><circle cx="146.9" cy="26.7" r="3" fill="#6f8468" stroke="#56684f" stroke-width="0.5" stroke-dasharray="1 0.6"/><circle cx="154.6" cy="26.7" r="3" fill="#6f8468" stroke="#56684f" stroke-width="0.5" stroke-dasharray="1 0.6"/><circle cx="162.3" cy="26.7" r="3" fill="#6f8468" stroke="#56684f" stroke-width="0.5" stroke-dasharray="1 0.6"/><circle cx="170.0" cy="26.7" r="3" fill="#6f8468" stroke="#56684f" stroke-width="0.5" stroke-dasharray="1 0.6"/><circle cx="139.1" cy="44.3" r="3" fill="#6f8468" stroke="#56684f" stroke-width="0.5" stroke-dasharray="1 0.6"/><circle cx="147.6" cy="46.4" r="3.5" fill="#6f8468" stroke="#56684f" stroke-width="0.5" stroke-dasharray="1 0.6"/><circle cx="155.3" cy="45.0" r="3.5" fill="#6f8468" stroke="#56684f" stroke-width="0.5" stroke-dasharray="1 0.6"/><circle cx="165.1" cy="54.8" r="3" fill="#6f8468" stroke="#56684f" stroke-width="0.5" stroke-dasharray="1 0.6"/><circle cx="153.9" cy="57.6" r="3" fill="#6f8468" stroke="#56684f" stroke-width="0.5" stroke-dasharray="1 0.6"/><circle cx="52.7" cy="49.9" r="3" fill="#6f8468" stroke="#56684f" stroke-width="0.5" stroke-dasharray="1 0.6"/><circle cx="59.0" cy="49.9" r="3" fill="#6f8468" stroke="#56684f" stroke-width="0.5" stroke-dasharray="1 0.6"/><circle cx="54.1" cy="56.2" r="3" fill="#6f8468" stroke="#56684f" stroke-width="0.5" stroke-dasharray="1 0.6"/><circle cx="165.8" cy="90.0" r="4" fill="#6f8468" stroke="#56684f" stroke-width="0.5" stroke-dasharray="1 0.6"/><circle cx="158.8" cy="91.4" r="3" fill="#6f8468" stroke="#56684f" stroke-width="0.5" stroke-dasharray="1 0.6"/><circle cx="146.2" cy="95.6" r="3.5" fill="#6f8468" stroke="#56684f" stroke-width="0.5" stroke-dasharray="1 0.6"/><circle cx="154.6" cy="104.0" r="4" fill="#6f8468" stroke="#56684f" stroke-width="0.5" stroke-dasharray="1 0.6"/><circle cx="142.7" cy="104.7" r="3.5" fill="#6f8468" stroke="#56684f" stroke-width="0.5" stroke-dasharray="1 0.6"/><circle cx="146.2" cy="118.8" r="3" fill="#6f8468" stroke="#56684f" stroke-width="0.5" stroke-dasharray="1 0.6"/><circle cx="153.2" cy="122.3" r="3" fill="#6f8468" stroke="#56684f" stroke-width="0.5" stroke-dasharray="1 0.6"/><circle cx="163.0" cy="118.0" r="3" fill="#6f8468" stroke="#56684f" stroke-width="0.5" stroke-dasharray="1 0.6"/><circle cx="123.0" cy="123.7" r="3" fill="#6f8468" stroke="#56684f" stroke-width="0.5" stroke-dasharray="1 0.6"/><circle cx="108.9" cy="108.9" r="2.5" fill="#6f8468" stroke="#56684f" stroke-width="0.5" stroke-dasharray="1 0.6"/><circle cx="108.9" cy="115.2" r="2.5" fill="#6f8468" stroke="#56684f" stroke-width="0.5" stroke-dasharray="1 0.6"/><circle cx="76.6" cy="97.0" r="2.5" fill="#6f8468" stroke="#56684f" stroke-width="0.5" stroke-dasharray="1 0.6"/><circle cx="98.4" cy="97.0" r="2.5" fill="#6f8468" stroke="#56684f" stroke-width="0.5" stroke-dasharray="1 0.6"/><circle cx="109.6" cy="97.0" r="2.5" fill="#6f8468" stroke="#56684f" stroke-width="0.5" stroke-dasharray="1 0.6"/><circle cx="70.3" cy="71.0" r="2" fill="#6f8468" stroke="#56684f" stroke-width="0.5" stroke-dasharray="1 0.6"/><circle cx="73.1" cy="78.7" r="2" fill="#6f8468" stroke="#56684f" stroke-width="0.5" stroke-dasharray="1 0.6"/></svg><span style="position:absolute;left:577px;top:741.5px;line-height:15px;font-size:12px;font-family:'Liberation Sans',sans-serif;color:#1a1a1a;white-space:nowrap;transform-origin:0 0;transform:scaleX(0.853);">File name:</span><div style="position:absolute;left:596px;top:756px;width:6px;height:1px;background:#1a1a1a;"></div><div style="position:absolute;left:652px;top:742px;width:341px;height:21px;background:#ffffff;border:1px solid #7a7a7a;border-radius:3px;box-sizing:border-box;"></div><span style="position:absolute;left:655px;top:744.5px;line-height:15px;font-size:12px;font-family:'Liberation Sans',sans-serif;color:#1a1a1a;white-space:nowrap;transform-origin:0 0;transform:scaleX(0.890);">Planta_Base.jpg</span><svg style="position:absolute;left:979px;top:750px;overflow:visible;" width="10" height="6" viewBox="0 0 10 6"><path d="M0.5 0.5 L5 5 L9.5 0.5" fill="none" stroke="#555" stroke-width="1"/></svg><span style="position:absolute;left:577px;top:772.5px;line-height:15px;font-size:12px;font-family:'Liberation Sans',sans-serif;color:#1a1a1a;white-space:nowrap;transform-origin:0 0;transform:scaleX(0.864);">Files of type:</span><div style="position:absolute;left:652px;top:773px;width:341px;height:21px;background:#fbfbfb;border:1px solid #d5d5d5;border-radius:3px;box-sizing:border-box;"></div><span style="position:absolute;left:655px;top:775.5px;line-height:15px;font-size:12px;font-family:'Liberation Sans',sans-serif;color:#1a1a1a;white-space:nowrap;transform-origin:0 0;transform:scaleX(0.868);">All files (*.*)</span><svg style="position:absolute;left:979px;top:781px;overflow:visible;" width="10" height="6" viewBox="0 0 10 6"><path d="M0.5 0.5 L5 5 L9.5 0.5" fill="none" stroke="#555" stroke-width="1"/></svg><div style="position:absolute;left:997px;top:741px;width:63px;height:21px;background:#fdfdfd;border:1px solid #d0d0d0;border-radius:4px;box-sizing:border-box;"></div><span style="position:absolute;left:1014px;top:743.5px;line-height:15px;font-size:12px;font-family:'Liberation Sans',sans-serif;color:#1a1a1a;white-space:nowrap;transform-origin:0 0;transform:scaleX(0.947);">Open</span><div style="position:absolute;left:1014px;top:757px;width:8px;height:1px;background:#1a1a1a;"></div><div style="position:absolute;left:1063px;top:741px;width:14px;height:21px;background:#fdfdfd;border:1px solid #d0d0d0;border-radius:4px;box-sizing:border-box;"></div><svg style="position:absolute;left:1066px;top:749px;overflow:visible;" width="8" height="4" viewBox="0 0 8 4"><path d="M0 0 H8 L4.0 4 Z" fill="#111"/></svg><div style="position:absolute;left:997px;top:772px;width:81px;height:21px;background:#fdfdfd;border:1px solid #d0d0d0;border-radius:4px;box-sizing:border-box;"></div><span style="position:absolute;left:1019px;top:774.5px;line-height:15px;font-size:12px;font-family:'Liberation Sans',sans-serif;color:#1a1a1a;white-space:nowrap;transform-origin:0 0;transform:scaleX(0.931);">Cancel</span></body></html>
